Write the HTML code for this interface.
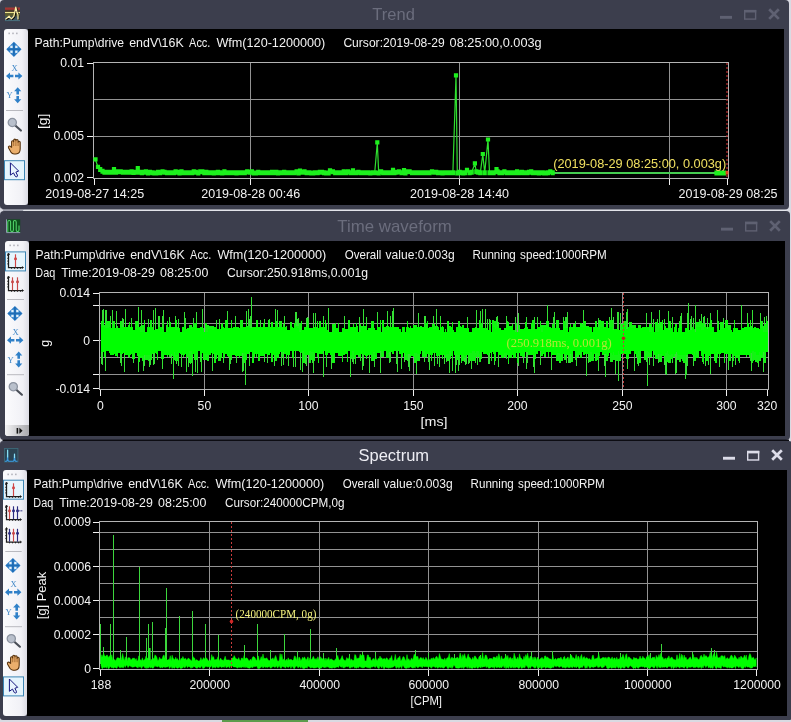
<!DOCTYPE html>
<html lang="en"><head><meta charset="utf-8"><title>Trend / Time waveform / Spectrum</title>
<style>
html,body{margin:0;padding:0;background:#3c3e4d;overflow:hidden}
body{width:791px;height:722px;position:relative}
svg text{white-space:pre}
</style></head>
<body>
<svg width="791" height="722" viewBox="0 0 791 722" style="display:block;will-change:transform" shape-rendering="auto">

<defs>
<linearGradient id="tbg" x1="0" x2="1" y1="0" y2="0">
 <stop offset="0" stop-color="#fbfbfd"/><stop offset="0.75" stop-color="#f1f1f6"/><stop offset="1" stop-color="#dcdce4"/>
</linearGradient>
<linearGradient id="ovf" x1="0" x2="1" y1="0" y2="0">
 <stop offset="0" stop-color="#f4f4f6"/><stop offset="1" stop-color="#a8a8ac"/>
</linearGradient>
<g id="i-move">
 <polygon points="0,-7.6 7.6,0 0,7.6 -7.6,0" fill="#2c7cc6"/>
 <polygon points="0,-6.2 6.2,0 0,6.2 -6.2,0" fill="#3f90d6"/>
 <rect x="-0.9" y="-6.4" width="1.8" height="12.8" fill="#1f6cb4"/>
 <rect x="-6.4" y="-0.9" width="12.8" height="1.8" fill="#1f6cb4"/>
 <rect x="-3.6" y="-3.6" width="2.3" height="2.3" fill="#e4f0fa"/>
 <rect x="1.3" y="-3.6" width="2.3" height="2.3" fill="#e4f0fa"/>
 <rect x="-3.6" y="1.3" width="2.3" height="2.3" fill="#e4f0fa"/>
 <rect x="1.3" y="1.3" width="2.3" height="2.3" fill="#e4f0fa"/>
</g>
<g id="i-harrows">
 <polygon points="-8.2,0 -4.2,-3.6 -4.2,-1.3 -0.8,-1.3 -0.8,1.3 -4.2,1.3 -4.2,3.6" fill="#2f80c8"/>
 <polygon points="8.2,0 4.2,-3.6 4.2,-1.3 0.8,-1.3 0.8,1.3 4.2,1.3 4.2,3.6" fill="#2f80c8"/>
</g>
<g id="i-varrows">
 <polygon points="0,-8 -3.6,-4 -1.3,-4 -1.3,-0.8 1.3,-0.8 1.3,-4 3.6,-4" fill="#2f80c8"/>
 <polygon points="0,8 -3.6,4 -1.3,4 -1.3,0.8 1.3,0.8 1.3,4 3.6,4" fill="#2f80c8"/>
</g>
<g id="i-zoom">
 <line x1="3" y1="3" x2="8.6" y2="8" stroke="#4a4f58" stroke-width="2.2" stroke-linecap="round"/>
 <circle cx="0" cy="0" r="4.1" fill="#b9c0cc" stroke="#8c93a0" stroke-width="1.3"/>
</g>
<g id="i-hand">
 <path d="M-2.9,0.6 V-4.9 a1.05,1.05 0 0 1 2.1,0 V-6.4 a1.1,1.1 0 0 1 2.2,0 V-6 a1.1,1.1 0 0 1 2.2,0 V-4.4 a1.05,1.05 0 0 1 2.1,0 V2.2 q0,5.2 -4.2,5.2 H-0.4 q-2,0 -3.2,-1.9 L-5.9,1.4 q-0.7,-1.3 0.4,-1.9 q1,-0.5 1.8,0.6 Z"
  fill="#eaae6c" stroke="#54300c" stroke-width="1.05" stroke-linejoin="round"/>
 <path d="M-0.8,-4.9 V-0.6 M1.4,-6 V-0.6 M3.6,-4.4 V-0.6" stroke="#8a5420" stroke-width="0.7" fill="none"/>
</g>
<g id="i-ptr">
 <path d="M0,0 V12.3 L3.1,10.1 L4.7,13.2 q0.7,1.3 1.8,0.8 q1,-0.6 0.4,-1.8 L5.5,9.3 L8.3,8.3 Z" fill="#e9f5fd" stroke="#15157e" stroke-width="1" stroke-linejoin="round"/>
</g>
<g id="i-axes">
 <path d="M0,-0.5 V13.5 H14.6" fill="none" stroke="#1c1c1c" stroke-width="1.25"/>
 <path d="M-1.4,1.5 H0 M-1.4,4.3 H0 M-1.4,7.1 H0 M-1.4,9.9 H0 M3,13.5 V14.9 M6,13.5 V14.9 M9,13.5 V14.9 M12,13.5 V14.9 M-1.2,1 L0,-1 L1.2,1 M13.4,12.4 L15,13.5 L13.4,14.6" fill="none" stroke="#1c1c1c" stroke-width="0.8"/>
</g>
</defs>

<rect x="0" y="0" width="791" height="722" fill="#d9dae2" />
<rect x="222" y="720" width="86" height="2" fill="#5c9c4c" />
<rect x="0" y="0" width="789" height="209.5" rx="4" fill="#3c3e4d"/>
<rect x="24" y="209.9" width="762" height="1.0" fill="#e4e5ec" />
<rect x="3" y="209.9" width="20" height="0.9" fill="#8c8e9c" />
<rect x="0" y="208.5" width="2.2" height="5" fill="#d9dae2" />
<rect x="0" y="211" width="790" height="229" rx="4" fill="#3c3e4d"/>
<rect x="2.5" y="439.6" width="786.5" height="1.4" fill="#0c0c12" />
<rect x="0" y="441" width="792" height="279" rx="3" fill="#3c3e4d"/>
<rect x="28" y="29" width="756" height="176" fill="#000" />
<rect x="29" y="241" width="756" height="195" fill="#000" />
<rect x="27" y="470" width="760" height="246" fill="#000" />
<g transform="translate(5,7)">
<rect x="0" y="0" width="15" height="14" fill="#3f4a48" />
<rect x="0" y="0.5" width="15" height="2.4" fill="#a43434" />
<rect x="0" y="2.9" width="15" height="2.2" fill="#4a3a2a" />
<rect x="0" y="6" width="15" height="3.5" fill="#5a5c30" />
<rect x="0" y="9.5" width="15" height="4" fill="#3e5562" />
<line x1="0" y1="5.5" x2="15" y2="5.5" stroke="#ece48c" stroke-width="1.1" />
<path d="M1.2,13.2 L4.9,10 L7.2,12.6 L9.6,10.2 L10.6,6 L11.6,1 L12.7,5.5 L13.8,8.5 L13.8,13.2" fill="none" stroke="#0c0c08" stroke-width="1.3" stroke-linejoin="round"/>
<path d="M0.4,12.4 L4.1,9.2 L6.4,11.8 L8.8,9.4 L9.8,5.2 L10.8,0.2 L11.9,4.7 L13,7.7 L13,12.6" fill="none" stroke="#fff2a8" stroke-width="1.25" stroke-linejoin="round"/>
<line x1="0" y1="13.6" x2="15" y2="13.6" stroke="#4c7484" stroke-width="0.9" />
</g>
<g transform="translate(6,219)">
<rect x="0.4" y="0.4" width="13.8" height="13.4" fill="#0c4e1a"/>
<path d="M0.5,0.3 V13.6 H14.2" fill="none" stroke="#8e9eae" stroke-width="1"/>
<path d="M1.8,13 V3 q0,-1.6 1.4,-1.6 q1.4,0 1.4,1.6 V11 q0,1.6 1.4,1.6 q1.4,0 1.4,-1.6 V3 q0,-1.6 1.4,-1.6 q1.4,0 1.4,1.6 V11 q0,1.6 1.4,1.6 q1.4,0 1.4,-1.6 V6.5" fill="none" stroke="#52d46a" stroke-width="1.05"/>
</g>
<g transform="translate(4,448)">
<rect x="0.5" y="0.5" width="13.4" height="13.4" fill="#2b4352" stroke="#3d6878" stroke-width="0.9"/>
<path d="M1,13.2 H2.4 q0.9,-0.3 1,-2 L3.6,1.8 L3.8,11.2 q0.1,1.7 1,2 H9.2 q0.9,-0.3 1,-1.8 L10.5,5.8 L10.8,11.4 q0.1,1.5 1,1.8 H13.4" fill="none" stroke="#3c9ce4" stroke-width="1.15"/>
<path d="M3.6,1.8 V9.5 M10.5,5.8 V10" fill="none" stroke="#8fe2f2" stroke-width="1.1"/>
</g>
<text x="393.6" y="19.8" font-size="16.6" fill="#6b6d7d" font-family='"Liberation Sans", sans-serif' text-anchor="middle" textLength="42.5" lengthAdjust="spacingAndGlyphs" >Trend</text>
<text x="394.6" y="231.6" font-size="16.6" fill="#6b6d7d" font-family='"Liberation Sans", sans-serif' text-anchor="middle" textLength="114.5" lengthAdjust="spacingAndGlyphs" >Time waveform</text>
<text x="393.8" y="460.8" font-size="16.6" fill="#eeeef4" font-family='"Liberation Sans", sans-serif' text-anchor="middle" textLength="70.5" lengthAdjust="spacingAndGlyphs" >Spectrum</text>
<rect x="720" y="15.9" width="12" height="2.9" fill="#5f6172" />
<rect x="744.7" y="10.7" width="10.9" height="8.4" fill="none" stroke="#5f6172" stroke-width="1.4"/>
<rect x="744" y="9.9" width="12.3" height="2.6" fill="#5f6172" />
<path d="M769.2,9.3 l9.6,9.6 M778.8,9.3 l-9.6,9.6" stroke="#5f6172" stroke-width="2.7" fill="none"/>
<rect x="721" y="227.7" width="12" height="2.9" fill="#5f6172" />
<rect x="745.7" y="222.5" width="10.9" height="8.4" fill="none" stroke="#5f6172" stroke-width="1.4"/>
<rect x="745" y="221.7" width="12.3" height="2.6" fill="#5f6172" />
<path d="M770.2,221.1 l9.6,9.6 M779.8,221.1 l-9.6,9.6" stroke="#5f6172" stroke-width="2.7" fill="none"/>
<rect x="723" y="456.8" width="12" height="2.9" fill="#dcdce8" />
<rect x="747.7" y="451.6" width="10.9" height="8.4" fill="none" stroke="#dcdce8" stroke-width="1.4"/>
<rect x="747" y="450.8" width="12.3" height="2.6" fill="#dcdce8" />
<path d="M772.2,450.2 l9.6,9.6 M781.8,450.2 l-9.6,9.6" stroke="#dcdce8" stroke-width="2.7" fill="none"/>
<rect x="4" y="29" width="24" height="176" rx="3" ry="3" fill="url(#tbg)"/>
<rect x="8.399999999999999" y="32.6" width="1.6" height="1.6" fill="#b4b4bc" />
<rect x="12.2" y="32.6" width="1.6" height="1.6" fill="#b4b4bc" />
<rect x="16.0" y="32.6" width="1.6" height="1.6" fill="#b4b4bc" />
<use href="#i-move" x="13.9" y="49.3"/>
<text x="14.5" y="70.7" font-size="8.6" fill="#3f86c6" font-family='"Liberation Serif", serif' text-anchor="middle" >X</text>
<use href="#i-harrows" x="14.200000000000001" y="76"/>
<text x="9.600000000000001" y="98.3" font-size="8.6" fill="#3f86c6" font-family='"Liberation Serif", serif' text-anchor="middle" >Y</text>
<use href="#i-varrows" x="17.7" y="95.3"/>
<line x1="6" y1="110.5" x2="23" y2="110.5" stroke="#b9b9bf" stroke-width="1" />
<use href="#i-zoom" x="12.3" y="122.5"/>
<use href="#i-hand" x="14.5" y="146.6"/>
<rect x="4.5" y="160.7" width="20" height="19" fill="#e6f5fd" stroke="#3d86b4" stroke-width="1"/>
<use href="#i-ptr" x="10.4" y="162.8"/>
<rect x="5" y="241" width="24" height="195" rx="3" ry="3" fill="url(#tbg)"/>
<rect x="9.399999999999999" y="244.6" width="1.6" height="1.6" fill="#b4b4bc" />
<rect x="13.2" y="244.6" width="1.6" height="1.6" fill="#b4b4bc" />
<rect x="17.0" y="244.6" width="1.6" height="1.6" fill="#b4b4bc" />
<rect x="5.5" y="251.9" width="20" height="19" fill="#e6f5fd" stroke="#3d86b4" stroke-width="1"/>
<use href="#i-axes" x="8.5" y="254"/>
<line x1="15.5" y1="254.3" x2="15.5" y2="267.2" stroke="#d04444" stroke-width="1.15" />
<circle cx="15.5" cy="258.8" r="1.5" fill="#d04444"/>
<use href="#i-axes" x="8.5" y="277"/>
<line x1="12.5" y1="277.3" x2="12.5" y2="290.2" stroke="#c84848" stroke-width="1.15" />
<circle cx="12.5" cy="281.8" r="1.5" fill="#c84848"/>
<line x1="17.5" y1="277.3" x2="17.5" y2="290.2" stroke="#c84848" stroke-width="1.15" />
<circle cx="17.5" cy="281.8" r="1.5" fill="#c84848"/>
<line x1="7" y1="299.5" x2="24" y2="299.5" stroke="#b9b9bf" stroke-width="1" />
<use href="#i-move" x="14.9" y="313.5"/>
<text x="15.5" y="334.9" font-size="8.6" fill="#3f86c6" font-family='"Liberation Serif", serif' text-anchor="middle" >X</text>
<use href="#i-harrows" x="15.200000000000001" y="340.2"/>
<text x="10.600000000000001" y="362.5" font-size="8.6" fill="#3f86c6" font-family='"Liberation Serif", serif' text-anchor="middle" >Y</text>
<use href="#i-varrows" x="18.7" y="359.5"/>
<line x1="7" y1="374.7" x2="24" y2="374.7" stroke="#b9b9bf" stroke-width="1" />
<use href="#i-zoom" x="13.3" y="386.7"/>
<path d="M5,425 H29 V433 q0,3 -3,3 H8 q-3,0 -3,-3 Z" fill="url(#ovf)"/>
<rect x="16.6" y="428" width="1.6" height="5.6" fill="#111" />
<polygon points="19.4,427.8 22.6,430.8 19.4,433.8" fill="#111"/>
<rect x="3" y="470" width="24" height="246" rx="3" ry="3" fill="url(#tbg)"/>
<rect x="7.3999999999999995" y="473.6" width="1.6" height="1.6" fill="#b4b4bc" />
<rect x="11.2" y="473.6" width="1.6" height="1.6" fill="#b4b4bc" />
<rect x="15.0" y="473.6" width="1.6" height="1.6" fill="#b4b4bc" />
<rect x="3.5" y="480.2" width="20" height="19" fill="#e6f5fd" stroke="#3d86b4" stroke-width="1"/>
<use href="#i-axes" x="6.5" y="483"/>
<line x1="13.5" y1="483.3" x2="13.5" y2="496.2" stroke="#d04444" stroke-width="1.15" />
<circle cx="13.5" cy="487.8" r="1.5" fill="#d04444"/>
<use href="#i-axes" x="6.5" y="506"/>
<line x1="9.5" y1="506.3" x2="9.5" y2="519.2" stroke="#c84848" stroke-width="1.15" />
<circle cx="9.5" cy="510.8" r="1.5" fill="#c84848"/>
<line x1="13.5" y1="506.3" x2="13.5" y2="519.2" stroke="#2c2c80" stroke-width="1.15" />
<circle cx="13.5" cy="510.8" r="1.5" fill="#2c2c80"/>
<line x1="17.5" y1="506.3" x2="17.5" y2="519.2" stroke="#2c2c80" stroke-width="1.15" />
<circle cx="17.5" cy="510.8" r="1.5" fill="#2c2c80"/>
<rect x="19.4" y="510.2" width="1.1" height="1.2" fill="#2c2c80" />
<rect x="21.2" y="510.2" width="1.1" height="1.2" fill="#2c2c80" />
<use href="#i-axes" x="6.5" y="528.5"/>
<line x1="9.5" y1="528.8" x2="9.5" y2="541.7" stroke="#2c2c80" stroke-width="1.15" />
<circle cx="9.5" cy="533.3" r="1.5" fill="#2c2c80"/>
<line x1="13.5" y1="528.8" x2="13.5" y2="541.7" stroke="#c84848" stroke-width="1.15" />
<circle cx="13.5" cy="533.3" r="1.5" fill="#c84848"/>
<line x1="17.5" y1="528.8" x2="17.5" y2="541.7" stroke="#2c2c80" stroke-width="1.15" />
<circle cx="17.5" cy="533.3" r="1.5" fill="#2c2c80"/>
<line x1="5.3" y1="551.5" x2="21.7" y2="551.5" stroke="#b9b9bf" stroke-width="1" />
<use href="#i-move" x="12.9" y="565.5"/>
<text x="13.5" y="586.9000000000001" font-size="8.6" fill="#3f86c6" font-family='"Liberation Serif", serif' text-anchor="middle" >X</text>
<use href="#i-harrows" x="13.200000000000001" y="592.2"/>
<text x="8.600000000000001" y="614.5" font-size="8.6" fill="#3f86c6" font-family='"Liberation Serif", serif' text-anchor="middle" >Y</text>
<use href="#i-varrows" x="16.7" y="611.5"/>
<line x1="5" y1="626.7" x2="22" y2="626.7" stroke="#b9b9bf" stroke-width="1" />
<use href="#i-zoom" x="11.3" y="638.7"/>
<use href="#i-hand" x="13.5" y="662.8000000000001"/>
<rect x="3.5" y="676.9000000000001" width="20" height="19" fill="#e6f5fd" stroke="#3d86b4" stroke-width="1"/>
<use href="#i-ptr" x="9.4" y="679.0"/>
<text y="47" font-size="12.4" fill="#f2f2f2" font-family='"Liberation Sans", sans-serif'><tspan x="34.5" textLength="89.6" lengthAdjust="spacingAndGlyphs">Path:Pump\drive</tspan> <tspan x="129.2" textLength="54.5" lengthAdjust="spacingAndGlyphs">endV\16K</tspan> <tspan x="189.1" textLength="21.3" lengthAdjust="spacingAndGlyphs">Acc.</tspan> <tspan x="216.4" textLength="108.9" lengthAdjust="spacingAndGlyphs">Wfm(120-1200000)</tspan></text>
<text y="47" font-size="12.4" fill="#f2f2f2" font-family='"Liberation Sans", sans-serif'><tspan x="343.4" textLength="101.4" lengthAdjust="spacingAndGlyphs">Cursor:2019-08-29</tspan> <tspan x="449.6" textLength="92.1" lengthAdjust="spacingAndGlyphs">08:25:00,0.003g</tspan></text>
<line x1="93" y1="99.5" x2="728" y2="99.5" stroke="#929292" stroke-width="1" />
<line x1="93" y1="136.5" x2="728" y2="136.5" stroke="#929292" stroke-width="1" />
<line x1="250.5" y1="62" x2="250.5" y2="178" stroke="#929292" stroke-width="1" />
<line x1="459.5" y1="62" x2="459.5" y2="178" stroke="#929292" stroke-width="1" />
<line x1="669.5" y1="62" x2="669.5" y2="178" stroke="#929292" stroke-width="1" />
<rect x="93.5" y="62.5" width="635" height="116" fill="none" stroke="#b4b4b4" stroke-width="1"/>
<line x1="87" y1="63.5" x2="93" y2="63.5" stroke="#f0f0f0" stroke-width="1" />
<line x1="87" y1="136.5" x2="93" y2="136.5" stroke="#f0f0f0" stroke-width="1" />
<line x1="87" y1="177.5" x2="93" y2="177.5" stroke="#f0f0f0" stroke-width="1" />
<line x1="94.5" y1="179" x2="94.5" y2="185" stroke="#f0f0f0" stroke-width="1" />
<line x1="250.5" y1="179" x2="250.5" y2="185" stroke="#f0f0f0" stroke-width="1" />
<line x1="459.5" y1="179" x2="459.5" y2="185" stroke="#f0f0f0" stroke-width="1" />
<line x1="669.5" y1="179" x2="669.5" y2="185" stroke="#f0f0f0" stroke-width="1" />
<line x1="727.5" y1="179" x2="727.5" y2="185" stroke="#f0f0f0" stroke-width="1" />
<text x="84" y="67.2" font-size="12.2" fill="#f2f2f2" font-family='"Liberation Sans", sans-serif' text-anchor="end" >0.01</text>
<text x="84" y="140.2" font-size="12.2" fill="#f2f2f2" font-family='"Liberation Sans", sans-serif' text-anchor="end" >0.005</text>
<text x="84" y="181.8" font-size="12.2" fill="#f2f2f2" font-family='"Liberation Sans", sans-serif' text-anchor="end" >0.002</text>
<text x="0" y="0" font-size="12.4" fill="#f2f2f2" font-family='"Liberation Sans", sans-serif' text-anchor="middle" textLength="15.2" lengthAdjust="spacingAndGlyphs" transform="translate(47.4,121.4) rotate(-90)">[g]</text>
<text x="45.2" y="198.2" font-size="12.4" fill="#f2f2f2" font-family='"Liberation Sans", sans-serif' textLength="99" lengthAdjust="spacingAndGlyphs" >2019-08-27 14:25</text>
<text x="250.7" y="198.2" font-size="12.4" fill="#f2f2f2" font-family='"Liberation Sans", sans-serif' text-anchor="middle" textLength="99" lengthAdjust="spacingAndGlyphs" >2019-08-28 00:46</text>
<text x="459.6" y="198.2" font-size="12.4" fill="#f2f2f2" font-family='"Liberation Sans", sans-serif' text-anchor="middle" textLength="99" lengthAdjust="spacingAndGlyphs" >2019-08-28 14:40</text>
<text x="777.6" y="198.2" font-size="12.4" fill="#f2f2f2" font-family='"Liberation Sans", sans-serif' text-anchor="end" textLength="99" lengthAdjust="spacingAndGlyphs" >2019-08-29 08:25</text>
<polyline fill="none" stroke="#44cc50" stroke-width="2" stroke-linejoin="round" points="553.5,173.0 716.5,173.0 719.0,172.9 721.5,173.1 724.0,172.9 727.0,173.0"/>
<polyline fill="none" stroke="#2fe02f" stroke-width="1.2" stroke-linejoin="round" points="95.5,159.7 98.0,167.2 100.2,169.6 102.5,171.2 104.5,172.2 107.0,172.2 108.7,172.2 110.7,172.2 112.5,172.2 114.0,169.6 116.0,172.2 118.2,171.7 120.7,171.7 122.9,172.2 125.4,172.2 127.5,172.2 129.4,172.2 131.6,171.7 133.5,172.4 135.8,172.2 137.8,168.6 139.8,172.2 141.9,172.8 144.1,172.2 145.9,171.8 148.0,172.9 150.0,172.2 152.4,172.8 154.4,172.9 156.2,172.9 158.1,172.2 160.1,172.8 162.5,171.8 164.5,172.2 167.0,172.8 169.1,172.8 171.4,172.8 173.9,172.8 175.6,171.8 177.4,172.2 179.5,172.9 181.5,171.8 183.4,172.8 185.6,172.8 187.4,172.8 189.8,172.8 192.1,172.8 193.8,171.8 195.8,172.2 198.3,172.9 200.3,171.8 202.3,171.8 204.3,172.8 206.3,172.2 208.1,172.8 210.0,172.8 211.8,172.8 213.8,172.9 215.9,172.8 217.9,172.2 219.9,172.8 222.2,172.9 224.4,171.8 226.4,172.8 228.6,172.8 231.1,172.8 232.9,172.8 234.8,172.8 236.5,172.9 238.6,172.8 240.6,172.8 242.6,172.8 244.8,172.8 247.2,171.8 249.6,172.2 251.9,171.8 253.6,172.9 255.9,172.9 258.2,172.2 260.2,172.8 262.2,172.8 264.4,172.8 266.3,172.8 268.3,172.8 270.3,172.8 272.1,172.2 273.9,172.8 276.3,172.2 278.1,172.9 279.9,172.8 281.8,172.8 284.2,172.2 286.2,172.8 288.0,172.8 290.5,172.8 292.6,172.8 294.3,172.8 296.6,171.8 298.6,172.9 300.0,170.9 302.5,172.2 304.5,171.8 306.7,172.8 309.0,172.8 311.4,172.9 313.2,172.9 315.1,172.8 317.6,172.8 319.9,172.2 322.0,172.2 324.0,172.8 326.2,172.9 328.6,172.9 330.0,170.8 332.9,171.8 335.2,172.8 337.3,172.8 339.6,172.8 341.9,172.8 343.8,171.8 346.0,172.8 348.1,171.8 350.6,172.8 353.0,170.8 354.2,172.8 356.2,172.8 358.4,172.2 360.8,172.8 363.2,172.8 365.5,172.8 367.9,172.8 370.3,172.9 372.6,172.8 374.7,172.8 377.3,142.7 378.7,172.9 381.1,171.8 383.2,172.8 385.5,172.8 387.7,172.8 390.2,172.8 393.0,170.3 394.4,172.8 396.6,172.2 399.1,171.8 401.5,172.8 404.0,170.6 405.4,172.9 407.9,171.8 409.6,171.8 412.1,172.8 414.6,172.8 416.9,172.8 418.7,172.8 420.6,172.8 422.9,172.8 424.8,172.8 427.2,172.8 429.6,172.8 432.0,171.8 434.2,172.2 436.2,172.2 438.0,172.8 440.1,172.8 442.5,172.9 444.4,172.8 446.7,172.8 448.6,172.8 450.7,172.8 452.9,172.8 456.0,75.7 457.3,172.9 459.6,172.2 461.3,172.8 463.3,172.9 465.0,172.8 467.0,170.2 469.6,172.8 471.7,172.2 474.9,163.7 476.3,171.8 478.2,172.2 480.3,172.8 482.8,154.4 484.7,172.8 488.0,139.9 489.5,172.8 491.5,172.8 493.6,172.8 496.5,169.5 497.6,171.8 499.5,172.8 501.9,172.8 504.4,171.8 506.6,172.8 508.5,172.8 511.0,172.8 513.3,172.8 515.3,172.8 517.1,171.8 519.5,172.8 521.8,172.2 523.8,172.8 525.6,172.8 527.4,172.8 529.1,172.2 531.2,171.8 532.9,172.8 535.0,172.8 537.1,172.8 538.9,172.9 540.8,172.8 542.6,172.8 544.3,172.9 546.1,172.9 547.9,172.8 550.3,171.8 552.7,172.8 553.5,173.0"/>
<path d="M93.4,157.2h4.2v4.2h-4.2zM95.9,164.7h4.2v4.2h-4.2zM98.1,167.1h4.2v5.0h-4.2zM100.4,168.7h4.2v5.0h-4.2zM102.4,169.7h4.2v5.0h-4.2zM104.9,169.7h4.2v5.0h-4.2zM106.6,169.7h4.2v5.0h-4.2zM108.6,169.7h4.2v5.0h-4.2zM110.4,169.7h4.2v5.0h-4.2zM111.9,167.1h4.2v5.0h-4.2zM113.9,169.7h4.2v5.0h-4.2zM116.1,169.2h4.2v5.0h-4.2zM118.6,169.2h4.2v5.0h-4.2zM120.8,169.7h4.2v5.0h-4.2zM123.3,169.7h4.2v5.0h-4.2zM125.4,169.7h4.2v5.0h-4.2zM127.3,169.7h4.2v5.0h-4.2zM129.5,169.2h4.2v5.0h-4.2zM131.4,169.9h4.2v5.0h-4.2zM133.7,169.7h4.2v5.0h-4.2zM135.7,166.1h4.2v5.0h-4.2zM137.7,169.7h4.2v5.0h-4.2zM139.8,170.2h4.2v5.0h-4.2zM142.0,169.8h4.2v5.0h-4.2zM143.8,169.2h4.2v5.0h-4.2zM145.9,170.4h4.2v5.0h-4.2zM147.9,169.8h4.2v5.0h-4.2zM150.3,170.2h4.2v5.0h-4.2zM152.3,170.4h4.2v5.0h-4.2zM154.1,170.4h4.2v5.0h-4.2zM156.0,169.8h4.2v5.0h-4.2zM158.0,170.2h4.2v5.0h-4.2zM160.4,169.2h4.2v5.0h-4.2zM162.4,169.8h4.2v5.0h-4.2zM164.9,170.2h4.2v5.0h-4.2zM167.0,170.2h4.2v5.0h-4.2zM169.3,170.2h4.2v5.0h-4.2zM171.8,170.2h4.2v5.0h-4.2zM173.5,169.2h4.2v5.0h-4.2zM175.3,169.8h4.2v5.0h-4.2zM177.4,170.4h4.2v5.0h-4.2zM179.4,169.2h4.2v5.0h-4.2zM181.3,170.2h4.2v5.0h-4.2zM183.5,170.2h4.2v5.0h-4.2zM185.3,170.2h4.2v5.0h-4.2zM187.7,170.2h4.2v5.0h-4.2zM190.0,170.2h4.2v5.0h-4.2zM191.7,169.2h4.2v5.0h-4.2zM193.7,169.8h4.2v5.0h-4.2zM196.2,170.4h4.2v5.0h-4.2zM198.2,169.2h4.2v5.0h-4.2zM200.2,169.2h4.2v5.0h-4.2zM202.2,170.2h4.2v5.0h-4.2zM204.2,169.8h4.2v5.0h-4.2zM206.0,170.2h4.2v5.0h-4.2zM207.9,170.2h4.2v5.0h-4.2zM209.7,170.2h4.2v5.0h-4.2zM211.7,170.4h4.2v5.0h-4.2zM213.8,170.2h4.2v5.0h-4.2zM215.8,169.8h4.2v5.0h-4.2zM217.8,170.2h4.2v5.0h-4.2zM220.1,170.4h4.2v5.0h-4.2zM222.3,169.2h4.2v5.0h-4.2zM224.3,170.2h4.2v5.0h-4.2zM226.5,170.2h4.2v5.0h-4.2zM229.0,170.2h4.2v5.0h-4.2zM230.8,170.2h4.2v5.0h-4.2zM232.7,170.2h4.2v5.0h-4.2zM234.4,170.4h4.2v5.0h-4.2zM236.5,170.2h4.2v5.0h-4.2zM238.5,170.2h4.2v5.0h-4.2zM240.5,170.2h4.2v5.0h-4.2zM242.7,170.2h4.2v5.0h-4.2zM245.1,169.2h4.2v5.0h-4.2zM247.5,169.8h4.2v5.0h-4.2zM249.8,169.2h4.2v5.0h-4.2zM251.5,170.4h4.2v5.0h-4.2zM253.8,170.4h4.2v5.0h-4.2zM256.1,169.8h4.2v5.0h-4.2zM258.1,170.2h4.2v5.0h-4.2zM260.1,170.2h4.2v5.0h-4.2zM262.3,170.2h4.2v5.0h-4.2zM264.2,170.2h4.2v5.0h-4.2zM266.2,170.2h4.2v5.0h-4.2zM268.2,170.2h4.2v5.0h-4.2zM270.0,169.8h4.2v5.0h-4.2zM271.8,170.2h4.2v5.0h-4.2zM274.2,169.8h4.2v5.0h-4.2zM276.0,170.4h4.2v5.0h-4.2zM277.8,170.2h4.2v5.0h-4.2zM279.7,170.2h4.2v5.0h-4.2zM282.1,169.8h4.2v5.0h-4.2zM284.1,170.2h4.2v5.0h-4.2zM285.9,170.2h4.2v5.0h-4.2zM288.4,170.2h4.2v5.0h-4.2zM290.5,170.2h4.2v5.0h-4.2zM292.2,170.2h4.2v5.0h-4.2zM294.5,169.2h4.2v5.0h-4.2zM296.5,170.4h4.2v5.0h-4.2zM297.9,168.4h4.2v5.0h-4.2zM300.4,169.8h4.2v5.0h-4.2zM302.4,169.2h4.2v5.0h-4.2zM304.6,170.2h4.2v5.0h-4.2zM306.9,170.2h4.2v5.0h-4.2zM309.3,170.4h4.2v5.0h-4.2zM311.1,170.4h4.2v5.0h-4.2zM313.0,170.2h4.2v5.0h-4.2zM315.5,170.2h4.2v5.0h-4.2zM317.8,169.8h4.2v5.0h-4.2zM319.9,169.8h4.2v5.0h-4.2zM321.9,170.2h4.2v5.0h-4.2zM324.1,170.4h4.2v5.0h-4.2zM326.5,170.4h4.2v5.0h-4.2zM327.9,168.3h4.2v5.0h-4.2zM330.8,169.2h4.2v5.0h-4.2zM333.1,170.2h4.2v5.0h-4.2zM335.2,170.2h4.2v5.0h-4.2zM337.5,170.2h4.2v5.0h-4.2zM339.8,170.2h4.2v5.0h-4.2zM341.7,169.2h4.2v5.0h-4.2zM343.9,170.2h4.2v5.0h-4.2zM346.0,169.2h4.2v5.0h-4.2zM348.5,170.2h4.2v5.0h-4.2zM350.9,168.3h4.2v5.0h-4.2zM352.1,170.2h4.2v5.0h-4.2zM354.1,170.2h4.2v5.0h-4.2zM356.3,169.8h4.2v5.0h-4.2zM358.7,170.2h4.2v5.0h-4.2zM361.1,170.2h4.2v5.0h-4.2zM363.4,170.2h4.2v5.0h-4.2zM365.8,170.2h4.2v5.0h-4.2zM368.2,170.4h4.2v5.0h-4.2zM370.5,170.2h4.2v5.0h-4.2zM372.6,170.2h4.2v5.0h-4.2zM375.2,140.2h4.2v4.2h-4.2zM376.6,170.4h4.2v5.0h-4.2zM379.0,169.2h4.2v5.0h-4.2zM381.1,170.2h4.2v5.0h-4.2zM383.4,170.2h4.2v5.0h-4.2zM385.6,170.2h4.2v5.0h-4.2zM388.1,170.2h4.2v5.0h-4.2zM390.9,167.8h4.2v5.0h-4.2zM392.3,170.2h4.2v5.0h-4.2zM394.5,169.8h4.2v5.0h-4.2zM397.0,169.2h4.2v5.0h-4.2zM399.4,170.2h4.2v5.0h-4.2zM401.9,168.1h4.2v5.0h-4.2zM403.3,170.4h4.2v5.0h-4.2zM405.8,169.2h4.2v5.0h-4.2zM407.5,169.2h4.2v5.0h-4.2zM410.0,170.2h4.2v5.0h-4.2zM412.5,170.2h4.2v5.0h-4.2zM414.8,170.2h4.2v5.0h-4.2zM416.6,170.2h4.2v5.0h-4.2zM418.5,170.2h4.2v5.0h-4.2zM420.8,170.2h4.2v5.0h-4.2zM422.7,170.2h4.2v5.0h-4.2zM425.1,170.2h4.2v5.0h-4.2zM427.5,170.2h4.2v5.0h-4.2zM429.9,169.2h4.2v5.0h-4.2zM432.1,169.8h4.2v5.0h-4.2zM434.1,169.8h4.2v5.0h-4.2zM435.9,170.2h4.2v5.0h-4.2zM438.0,170.2h4.2v5.0h-4.2zM440.4,170.4h4.2v5.0h-4.2zM442.3,170.2h4.2v5.0h-4.2zM444.6,170.2h4.2v5.0h-4.2zM446.5,170.2h4.2v5.0h-4.2zM448.6,170.2h4.2v5.0h-4.2zM450.8,170.2h4.2v5.0h-4.2zM453.9,73.2h4.2v4.2h-4.2zM455.2,170.4h4.2v5.0h-4.2zM457.5,169.8h4.2v5.0h-4.2zM459.2,170.2h4.2v5.0h-4.2zM461.2,170.4h4.2v5.0h-4.2zM462.9,170.2h4.2v5.0h-4.2zM464.9,167.7h4.2v5.0h-4.2zM467.5,170.2h4.2v5.0h-4.2zM469.6,169.8h4.2v5.0h-4.2zM472.8,161.2h4.2v4.2h-4.2zM474.2,169.2h4.2v5.0h-4.2zM476.1,169.8h4.2v5.0h-4.2zM478.2,170.2h4.2v5.0h-4.2zM480.7,151.9h4.2v4.2h-4.2zM482.6,170.2h4.2v5.0h-4.2zM485.9,137.4h4.2v4.2h-4.2zM487.4,170.2h4.2v5.0h-4.2zM489.4,170.2h4.2v5.0h-4.2zM491.5,170.2h4.2v5.0h-4.2zM494.4,167.0h4.2v5.0h-4.2zM495.5,169.2h4.2v5.0h-4.2zM497.4,170.2h4.2v5.0h-4.2zM499.8,170.2h4.2v5.0h-4.2zM502.3,169.2h4.2v5.0h-4.2zM504.5,170.2h4.2v5.0h-4.2zM506.4,170.2h4.2v5.0h-4.2zM508.9,170.2h4.2v5.0h-4.2zM511.2,170.2h4.2v5.0h-4.2zM513.2,170.2h4.2v5.0h-4.2zM515.0,169.2h4.2v5.0h-4.2zM517.4,170.2h4.2v5.0h-4.2zM519.7,169.8h4.2v5.0h-4.2zM521.7,170.2h4.2v5.0h-4.2zM523.5,170.2h4.2v5.0h-4.2zM525.3,170.2h4.2v5.0h-4.2zM527.0,169.8h4.2v5.0h-4.2zM529.1,169.2h4.2v5.0h-4.2zM530.8,170.2h4.2v5.0h-4.2zM532.9,170.2h4.2v5.0h-4.2zM535.0,170.2h4.2v5.0h-4.2zM536.8,170.4h4.2v5.0h-4.2zM538.7,170.2h4.2v5.0h-4.2zM540.5,170.2h4.2v5.0h-4.2zM542.2,170.4h4.2v5.0h-4.2zM544.0,170.4h4.2v5.0h-4.2zM545.8,170.2h4.2v5.0h-4.2zM548.2,169.2h4.2v5.0h-4.2zM550.6,170.2h4.2v5.0h-4.2zM714.4,170.5h4.2v5.0h-4.2zM716.9,170.4h4.2v5.0h-4.2zM719.4,170.6h4.2v5.0h-4.2zM721.9,170.4h4.2v5.0h-4.2z" fill="#1cf01c"/>
<line x1="727" y1="63" x2="727" y2="178" stroke="#c03030" stroke-width="1.2" stroke-dasharray="2 2"/>
<rect x="725.6" y="170.8" width="2.8" height="3.8" fill="#e04020" />
<text x="553.2" y="167.6" font-size="12.4" fill="#f0e060" font-family='"Liberation Sans", sans-serif' textLength="173" lengthAdjust="spacingAndGlyphs" >(2019-08-29 08:25:00, 0.003g)</text>
<text y="258.8" font-size="12.4" fill="#f2f2f2" font-family='"Liberation Sans", sans-serif'><tspan x="35.5" textLength="89.6" lengthAdjust="spacingAndGlyphs">Path:Pump\drive</tspan> <tspan x="130.2" textLength="54.5" lengthAdjust="spacingAndGlyphs">endV\16K</tspan> <tspan x="190.1" textLength="21.3" lengthAdjust="spacingAndGlyphs">Acc.</tspan> <tspan x="217.4" textLength="108.9" lengthAdjust="spacingAndGlyphs">Wfm(120-1200000)</tspan></text>
<text y="258.8" font-size="12.4" fill="#f2f2f2" font-family='"Liberation Sans", sans-serif'><tspan x="344.8" textLength="36.5" lengthAdjust="spacingAndGlyphs">Overall</tspan> <tspan x="385.6" textLength="69" lengthAdjust="spacingAndGlyphs">value:0.003g</tspan></text>
<text y="258.8" font-size="12.4" fill="#f2f2f2" font-family='"Liberation Sans", sans-serif'><tspan x="472.6" textLength="43.2" lengthAdjust="spacingAndGlyphs">Running</tspan> <tspan x="520.1" textLength="86.7" lengthAdjust="spacingAndGlyphs">speed:1000RPM</tspan></text>
<text y="276.8" font-size="12.4" fill="#f2f2f2" font-family='"Liberation Sans", sans-serif'><tspan x="35.3" textLength="19.9" lengthAdjust="spacingAndGlyphs">Daq</tspan> <tspan x="61.3" textLength="93.5" lengthAdjust="spacingAndGlyphs">Time:2019-08-29</tspan> <tspan x="160.1" textLength="48.3" lengthAdjust="spacingAndGlyphs">08:25:00</tspan></text>
<text x="227" y="276.8" font-size="12.4" fill="#f2f2f2" font-family='"Liberation Sans", sans-serif' textLength="141" lengthAdjust="spacingAndGlyphs" >Cursor:250.918ms,0.001g</text>
<line x1="99" y1="305.5" x2="768" y2="305.5" stroke="#929292" stroke-width="1" />
<line x1="99" y1="323.5" x2="768" y2="323.5" stroke="#929292" stroke-width="1" />
<line x1="99" y1="340.5" x2="768" y2="340.5" stroke="#929292" stroke-width="1" />
<line x1="99" y1="357.5" x2="768" y2="357.5" stroke="#929292" stroke-width="1" />
<line x1="99" y1="374.5" x2="768" y2="374.5" stroke="#929292" stroke-width="1" />
<line x1="204.5" y1="292" x2="204.5" y2="389" stroke="#929292" stroke-width="1" />
<line x1="308.5" y1="292" x2="308.5" y2="389" stroke="#929292" stroke-width="1" />
<line x1="413.5" y1="292" x2="413.5" y2="389" stroke="#929292" stroke-width="1" />
<line x1="517.5" y1="292" x2="517.5" y2="389" stroke="#929292" stroke-width="1" />
<line x1="622.5" y1="292" x2="622.5" y2="389" stroke="#929292" stroke-width="1" />
<line x1="726.5" y1="292" x2="726.5" y2="389" stroke="#929292" stroke-width="1" />
<rect x="99.5" y="292.5" width="669" height="97" fill="none" stroke="#b4b4b4" stroke-width="1"/>
<line x1="93" y1="293.5" x2="99" y2="293.5" stroke="#f0f0f0" stroke-width="1" />
<line x1="93" y1="305.5" x2="99" y2="305.5" stroke="#f0f0f0" stroke-width="1" />
<line x1="93" y1="340.5" x2="99" y2="340.5" stroke="#f0f0f0" stroke-width="1" />
<line x1="93" y1="374.5" x2="99" y2="374.5" stroke="#f0f0f0" stroke-width="1" />
<line x1="93" y1="388.5" x2="99" y2="388.5" stroke="#f0f0f0" stroke-width="1" />
<line x1="100.5" y1="390" x2="100.5" y2="396" stroke="#f0f0f0" stroke-width="1" />
<line x1="204.5" y1="390" x2="204.5" y2="396" stroke="#f0f0f0" stroke-width="1" />
<line x1="308.5" y1="390" x2="308.5" y2="396" stroke="#f0f0f0" stroke-width="1" />
<line x1="413.5" y1="390" x2="413.5" y2="396" stroke="#f0f0f0" stroke-width="1" />
<line x1="517.5" y1="390" x2="517.5" y2="396" stroke="#f0f0f0" stroke-width="1" />
<line x1="622.5" y1="390" x2="622.5" y2="396" stroke="#f0f0f0" stroke-width="1" />
<line x1="726.5" y1="390" x2="726.5" y2="396" stroke="#f0f0f0" stroke-width="1" />
<line x1="767.5" y1="390" x2="767.5" y2="396" stroke="#f0f0f0" stroke-width="1" />
<text x="90" y="297.4" font-size="12.2" fill="#f2f2f2" font-family='"Liberation Sans", sans-serif' text-anchor="end" >0.014</text>
<text x="90" y="345" font-size="12.2" fill="#f2f2f2" font-family='"Liberation Sans", sans-serif' text-anchor="end" >0</text>
<text x="90" y="393" font-size="12.2" fill="#f2f2f2" font-family='"Liberation Sans", sans-serif' text-anchor="end" >-0.014</text>
<text x="0" y="0" font-size="12.4" fill="#f2f2f2" font-family='"Liberation Sans", sans-serif' text-anchor="middle" transform="translate(49,343.2) rotate(-90)">g</text>
<text x="100.4" y="409.6" font-size="12.2" fill="#f2f2f2" font-family='"Liberation Sans", sans-serif' text-anchor="middle" >0</text>
<text x="204.4" y="409.6" font-size="12.2" fill="#f2f2f2" font-family='"Liberation Sans", sans-serif' text-anchor="middle" >50</text>
<text x="308.4" y="409.6" font-size="12.2" fill="#f2f2f2" font-family='"Liberation Sans", sans-serif' text-anchor="middle" >100</text>
<text x="413.4" y="409.6" font-size="12.2" fill="#f2f2f2" font-family='"Liberation Sans", sans-serif' text-anchor="middle" >150</text>
<text x="517.4" y="409.6" font-size="12.2" fill="#f2f2f2" font-family='"Liberation Sans", sans-serif' text-anchor="middle" >200</text>
<text x="622.4" y="409.6" font-size="12.2" fill="#f2f2f2" font-family='"Liberation Sans", sans-serif' text-anchor="middle" >250</text>
<text x="726.4" y="409.6" font-size="12.2" fill="#f2f2f2" font-family='"Liberation Sans", sans-serif' text-anchor="middle" >300</text>
<text x="767.2" y="409.6" font-size="12.2" fill="#f2f2f2" font-family='"Liberation Sans", sans-serif' text-anchor="middle" >320</text>
<text x="420.6" y="426.4" font-size="12.4" fill="#f2f2f2" font-family='"Liberation Sans", sans-serif' textLength="27" lengthAdjust="spacingAndGlyphs" >[ms]</text>
<path d="M101,340.5h1v23.9h-1zM102,340.5h1v24.3h-1zM103,308.5h1v32.0h-1zM106,319.4h1v21.1h-1zM110,316.4h1v24.1h-1zM116,310.7h1v29.8h-1zM120,340.5h1v22.8h-1zM121,340.5h1v25.1h-1zM122,317.7h1v22.8h-1zM123,319.3h1v21.2h-1zM125,309.3h1v31.2h-1zM131,318.3h1v22.2h-1zM133,340.5h1v22.9h-1zM138,306.9h1v33.6h-1zM143,340.5h1v30.5h-1zM144,340.5h1v25.0h-1zM148,318.8h1v21.7h-1zM149,340.5h1v26.2h-1zM150,340.5h1v24.2h-1zM153,340.5h1v24.1h-1zM154,340.5h1v23.4h-1zM155,307.9h1v32.6h-1zM158,315.5h1v25.0h-1zM159,316.2h1v24.3h-1zM162,316.4h1v24.1h-1zM162,340.5h1v28.4h-1zM163,309.7h1v30.8h-1zM169,316.5h1v24.0h-1zM171,340.5h1v23.2h-1zM173,340.5h1v29.6h-1zM175,315.8h1v24.7h-1zM176,340.5h1v23.7h-1zM178,319.4h1v21.1h-1zM178,340.5h1v25.8h-1zM181,340.5h1v26.3h-1zM184,312.4h1v28.1h-1zM185,317.5h1v23.0h-1zM186,340.5h1v31.4h-1zM188,340.5h1v26.1h-1zM190,340.5h1v23.0h-1zM192,340.5h1v35.6h-1zM193,318.1h1v22.4h-1zM195,340.5h1v31.6h-1zM196,311.8h1v28.7h-1zM197,340.5h1v32.1h-1zM202,308.8h1v31.7h-1zM212,340.5h1v30.1h-1zM216,319.5h1v21.0h-1zM219,319.2h1v21.3h-1zM223,340.5h1v22.1h-1zM227,310.5h1v30.0h-1zM229,340.5h1v29.8h-1zM230,340.5h1v23.4h-1zM235,316.3h1v24.2h-1zM236,340.5h1v22.1h-1zM242,340.5h1v31.1h-1zM243,340.5h1v30.8h-1zM246,310.9h1v29.6h-1zM248,308.7h1v31.8h-1zM249,318.9h1v21.6h-1zM249,340.5h1v25.6h-1zM250,316.2h1v24.3h-1zM260,319.5h1v21.0h-1zM264,319.4h1v21.1h-1zM264,340.5h1v21.4h-1zM267,340.5h1v22.1h-1zM269,319.4h1v21.1h-1zM274,340.5h1v25.4h-1zM275,309.3h1v31.2h-1zM277,309.7h1v30.8h-1zM281,340.5h1v25.6h-1zM283,340.5h1v24.4h-1zM284,316.0h1v24.5h-1zM288,340.5h1v25.1h-1zM293,340.5h1v26.2h-1zM295,311.9h1v28.6h-1zM295,340.5h1v26.8h-1zM296,311.6h1v28.9h-1zM297,318.8h1v21.7h-1zM298,318.1h1v22.4h-1zM300,340.5h1v29.4h-1zM302,340.5h1v31.3h-1zM303,340.5h1v21.1h-1zM305,340.5h1v23.9h-1zM306,317.8h1v22.7h-1zM306,340.5h1v25.1h-1zM307,316.5h1v24.0h-1zM308,318.1h1v22.4h-1zM312,340.5h1v22.6h-1zM313,313.4h1v27.1h-1zM313,340.5h1v32.6h-1zM315,313.3h1v27.2h-1zM323,315.5h1v25.0h-1zM323,340.5h1v36.0h-1zM326,340.5h1v26.1h-1zM328,307.8h1v32.7h-1zM331,340.5h1v28.2h-1zM344,315.8h1v24.7h-1zM350,340.5h1v36.8h-1zM352,340.5h1v21.9h-1zM353,340.5h1v23.1h-1zM355,340.5h1v23.4h-1zM359,316.8h1v23.7h-1zM362,340.5h1v29.8h-1zM363,308.5h1v32.0h-1zM363,340.5h1v25.3h-1zM366,317.0h1v23.5h-1zM369,340.5h1v32.0h-1zM374,340.5h1v26.8h-1zM377,312.1h1v28.4h-1zM380,340.5h1v32.2h-1zM387,311.0h1v29.5h-1zM389,340.5h1v22.3h-1zM390,316.2h1v24.3h-1zM390,340.5h1v21.5h-1zM392,310.9h1v29.6h-1zM393,307.8h1v32.7h-1zM396,340.5h1v23.0h-1zM397,340.5h1v31.6h-1zM401,340.5h1v28.3h-1zM404,340.5h1v21.3h-1zM408,340.5h1v26.5h-1zM409,340.5h1v30.2h-1zM416,340.5h1v33.1h-1zM418,312.5h1v28.0h-1zM424,315.8h1v24.7h-1zM424,340.5h1v21.6h-1zM425,316.4h1v24.1h-1zM428,340.5h1v21.3h-1zM429,340.5h1v29.3h-1zM433,315.9h1v24.6h-1zM434,340.5h1v25.8h-1zM436,309.3h1v31.2h-1zM437,340.5h1v23.8h-1zM439,340.5h1v26.0h-1zM440,315.8h1v24.7h-1zM444,340.5h1v23.9h-1zM446,340.5h1v21.8h-1zM449,340.5h1v32.4h-1zM452,340.5h1v30.5h-1zM455,340.5h1v32.3h-1zM456,340.5h1v24.3h-1zM458,340.5h1v30.0h-1zM459,340.5h1v24.5h-1zM461,340.5h1v22.0h-1zM464,340.5h1v21.6h-1zM465,340.5h1v24.0h-1zM466,340.5h1v23.8h-1zM467,317.4h1v23.1h-1zM468,340.5h1v23.4h-1zM469,340.5h1v22.4h-1zM471,340.5h1v28.2h-1zM475,340.5h1v22.6h-1zM476,309.7h1v30.8h-1zM477,340.5h1v24.5h-1zM480,310.5h1v30.0h-1zM482,309.0h1v31.5h-1zM485,309.3h1v31.2h-1zM487,318.5h1v22.0h-1zM488,340.5h1v23.1h-1zM489,318.7h1v21.8h-1zM489,340.5h1v23.0h-1zM494,340.5h1v24.8h-1zM496,316.6h1v23.9h-1zM497,315.6h1v24.9h-1zM498,340.5h1v26.0h-1zM506,315.6h1v24.9h-1zM508,340.5h1v23.7h-1zM515,316.9h1v23.6h-1zM518,312.8h1v27.7h-1zM518,340.5h1v25.9h-1zM523,340.5h1v22.6h-1zM526,316.8h1v23.7h-1zM526,340.5h1v28.1h-1zM527,340.5h1v22.6h-1zM533,340.5h1v26.0h-1zM534,317.4h1v23.1h-1zM534,340.5h1v32.9h-1zM537,317.3h1v23.2h-1zM540,340.5h1v24.7h-1zM547,304.9h1v35.6h-1zM551,340.5h1v29.1h-1zM553,317.1h1v23.4h-1zM554,311.6h1v28.9h-1zM563,317.2h1v23.3h-1zM565,317.4h1v23.1h-1zM566,316.5h1v24.0h-1zM566,340.5h1v22.9h-1zM567,312.3h1v28.2h-1zM568,340.5h1v22.9h-1zM569,340.5h1v22.9h-1zM570,340.5h1v22.6h-1zM576,340.5h1v25.5h-1zM583,309.7h1v30.8h-1zM586,340.5h1v35.2h-1zM588,340.5h1v22.8h-1zM598,318.1h1v22.4h-1zM598,340.5h1v30.3h-1zM604,340.5h1v25.0h-1zM609,316.7h1v23.8h-1zM611,307.6h1v32.9h-1zM613,316.8h1v23.7h-1zM615,340.5h1v33.1h-1zM617,312.0h1v28.5h-1zM618,311.9h1v28.6h-1zM620,312.6h1v27.9h-1zM626,311.8h1v28.7h-1zM627,309.3h1v31.2h-1zM627,340.5h1v28.1h-1zM634,340.5h1v30.4h-1zM637,340.5h1v23.4h-1zM638,340.5h1v25.4h-1zM646,313.2h1v27.3h-1zM646,340.5h1v21.1h-1zM649,340.5h1v24.8h-1zM651,311.8h1v28.7h-1zM653,319.1h1v21.4h-1zM653,340.5h1v25.7h-1zM657,319.1h1v21.4h-1zM658,340.5h1v22.5h-1zM659,310.2h1v30.3h-1zM664,319.4h1v21.1h-1zM664,340.5h1v24.5h-1zM665,340.5h1v31.8h-1zM666,340.5h1v34.9h-1zM668,311.0h1v29.5h-1zM672,317.1h1v23.4h-1zM672,340.5h1v22.2h-1zM675,340.5h1v33.6h-1zM676,340.5h1v32.5h-1zM680,315.9h1v24.6h-1zM681,312.8h1v27.7h-1zM685,340.5h1v38.0h-1zM686,340.5h1v34.8h-1zM687,312.9h1v27.6h-1zM687,340.5h1v25.0h-1zM690,319.4h1v21.1h-1zM691,315.6h1v24.9h-1zM693,317.5h1v23.0h-1zM693,340.5h1v25.7h-1zM695,304.5h1v36.0h-1zM699,319.3h1v21.2h-1zM701,313.5h1v27.0h-1zM703,316.9h1v23.6h-1zM703,340.5h1v23.6h-1zM704,315.6h1v24.9h-1zM705,340.5h1v25.4h-1zM707,318.0h1v22.5h-1zM708,340.5h1v24.6h-1zM710,312.6h1v27.9h-1zM710,340.5h1v33.2h-1zM717,309.5h1v31.0h-1zM719,340.5h1v26.7h-1zM723,317.7h1v22.8h-1zM728,340.5h1v29.1h-1zM732,340.5h1v26.0h-1zM735,340.5h1v24.2h-1zM739,340.5h1v22.3h-1zM741,305.2h1v35.3h-1zM747,312.5h1v28.0h-1zM751,340.5h1v30.9h-1zM752,309.7h1v30.8h-1zM752,340.5h1v21.7h-1zM755,340.5h1v21.6h-1zM758,340.5h1v26.6h-1zM760,313.2h1v27.3h-1zM763,340.5h1v31.6h-1zM764,316.9h1v23.6h-1zM765,340.5h1v21.9h-1zM766,315.6h1v24.9h-1zM251,296.5h1v44.0h-1zM688,302.5h1v38.0h-1zM647,340.5h1v45.0h-1zM245,340.5h1v44.0h-1zM173,340.5h1v38.0h-1zM618,340.5h1v40.0h-1zM112,309.5h1v31.0h-1zM102,309.5h1v31.0h-1zM103,309.5h1v31.0h-1zM105,309.5h1v31.0h-1zM106,309.5h1v31.0h-1zM105,340.5h1v30.0h-1zM141,309.5h1v31.0h-1zM153,309.5h1v31.0h-1zM201,340.5h1v31.0h-1zM138,340.5h1v31.0h-1zM124,340.5h1v31.0h-1zM665,340.5h1v33.0h-1zM605,340.5h1v36.0h-1z" fill="#34e034" shape-rendering="crispEdges"/>
<path d="M101,320.5h3v20.0h-3zM104,324.5h2v16.0h-2zM104,340.5h2v16.0h-2zM106,320.5h2v20.0h-2zM108,320.5h1v20.0h-1zM109,320.5h2v20.0h-2zM112,324.5h1v16.0h-1zM113,320.5h2v20.0h-2zM117,325.5h1v15.0h-1zM117,340.5h1v16.0h-1zM120,320.5h2v20.0h-2zM128,324.5h1v16.0h-1zM128,340.5h1v16.0h-1zM129,321.5h1v19.0h-1zM129,340.5h1v17.0h-1zM131,321.5h1v19.0h-1zM132,340.5h3v18.0h-3zM135,320.5h3v20.0h-3zM138,340.5h2v21.0h-2zM140,325.5h2v15.0h-2zM140,340.5h2v17.0h-2zM142,324.5h2v16.0h-2zM142,340.5h2v20.0h-2zM144,319.5h1v21.0h-1zM145,340.5h3v19.0h-3zM148,340.5h1v20.0h-1zM149,340.5h1v18.0h-1zM150,319.5h2v21.0h-2zM150,340.5h2v19.0h-2zM157,340.5h1v19.0h-1zM161,340.5h2v18.0h-2zM163,323.5h1v17.0h-1zM163,340.5h1v18.0h-1zM166,324.5h1v16.0h-1zM167,320.5h1v20.0h-1zM167,340.5h1v16.0h-1zM169,321.5h2v19.0h-2zM169,340.5h2v16.0h-2zM173,340.5h2v19.0h-2zM175,319.5h2v21.0h-2zM175,340.5h2v20.0h-2zM177,340.5h2v20.0h-2zM183,340.5h1v16.0h-1zM184,324.5h1v16.0h-1zM186,340.5h3v16.0h-3zM189,324.5h3v16.0h-3zM189,340.5h3v22.0h-3zM194,322.5h3v18.0h-3zM194,340.5h3v19.0h-3zM197,340.5h1v17.0h-1zM200,340.5h1v21.0h-1zM203,340.5h2v19.0h-2zM205,322.5h2v18.0h-2zM205,340.5h2v19.0h-2zM207,324.5h2v16.0h-2zM207,340.5h2v20.0h-2zM209,325.5h3v15.0h-3zM212,325.5h2v15.0h-2zM214,340.5h2v22.0h-2zM216,340.5h1v18.0h-1zM218,340.5h3v20.0h-3zM221,323.5h1v17.0h-1zM221,340.5h1v17.0h-1zM222,322.5h1v18.0h-1zM223,340.5h2v17.0h-2zM225,319.5h2v21.0h-2zM227,319.5h1v21.0h-1zM228,340.5h3v16.0h-3zM231,319.5h1v21.0h-1zM231,340.5h1v19.0h-1zM239,340.5h1v17.0h-1zM240,319.5h2v21.0h-2zM242,319.5h1v21.0h-1zM243,340.5h1v18.0h-1zM244,340.5h2v22.0h-2zM246,321.5h1v19.0h-1zM246,340.5h1v19.0h-1zM247,325.5h3v15.0h-3zM252,340.5h2v22.0h-2zM254,340.5h1v16.0h-1zM256,319.5h1v21.0h-1zM256,340.5h1v16.0h-1zM257,319.5h1v21.0h-1zM258,340.5h2v20.0h-2zM263,322.5h2v18.0h-2zM268,319.5h1v21.0h-1zM271,321.5h2v19.0h-2zM271,340.5h2v21.0h-2zM275,320.5h2v20.0h-2zM275,340.5h2v20.0h-2zM277,340.5h2v17.0h-2zM279,320.5h2v20.0h-2zM281,320.5h1v20.0h-1zM282,340.5h1v16.0h-1zM283,323.5h1v17.0h-1zM286,325.5h1v15.0h-1zM286,340.5h1v18.0h-1zM290,321.5h2v19.0h-2zM292,340.5h2v17.0h-2zM294,322.5h2v18.0h-2zM296,325.5h3v15.0h-3zM299,322.5h2v18.0h-2zM301,320.5h1v20.0h-1zM302,340.5h3v22.0h-3zM307,320.5h1v20.0h-1zM308,324.5h1v16.0h-1zM309,340.5h2v22.0h-2zM311,340.5h2v19.0h-2zM313,340.5h2v20.0h-2zM317,320.5h1v20.0h-1zM317,340.5h1v16.0h-1zM318,340.5h1v22.0h-1zM319,320.5h2v20.0h-2zM323,320.5h1v20.0h-1zM325,319.5h1v21.0h-1zM326,323.5h1v17.0h-1zM326,340.5h1v19.0h-1zM332,323.5h3v17.0h-3zM332,340.5h3v22.0h-3zM335,322.5h1v18.0h-1zM338,322.5h1v18.0h-1zM342,340.5h1v21.0h-1zM347,340.5h1v21.0h-1zM348,319.5h2v21.0h-2zM350,340.5h1v17.0h-1zM351,340.5h1v18.0h-1zM352,340.5h1v17.0h-1zM353,323.5h1v17.0h-1zM353,340.5h1v16.0h-1zM354,340.5h2v18.0h-2zM356,322.5h1v18.0h-1zM357,325.5h1v15.0h-1zM358,340.5h2v16.0h-2zM360,323.5h1v17.0h-1zM360,340.5h1v20.0h-1zM361,325.5h3v15.0h-3zM364,325.5h2v15.0h-2zM366,323.5h1v17.0h-1zM366,340.5h1v18.0h-1zM371,320.5h3v20.0h-3zM371,340.5h3v20.0h-3zM374,340.5h3v18.0h-3zM380,319.5h1v21.0h-1zM381,340.5h1v16.0h-1zM382,319.5h2v21.0h-2zM382,340.5h2v16.0h-2zM386,325.5h3v15.0h-3zM386,340.5h3v17.0h-3zM393,324.5h1v16.0h-1zM401,340.5h2v16.0h-2zM405,340.5h2v19.0h-2zM407,320.5h1v20.0h-1zM407,340.5h1v20.0h-1zM410,325.5h1v15.0h-1zM410,340.5h1v17.0h-1zM413,324.5h1v16.0h-1zM413,340.5h1v16.0h-1zM414,324.5h3v16.0h-3zM414,340.5h3v22.0h-3zM417,340.5h3v20.0h-3zM420,325.5h2v15.0h-2zM422,340.5h3v16.0h-3zM425,322.5h2v18.0h-2zM425,340.5h2v16.0h-2zM427,320.5h1v20.0h-1zM431,340.5h1v20.0h-1zM432,323.5h3v17.0h-3zM435,325.5h3v15.0h-3zM440,320.5h1v20.0h-1zM442,325.5h1v15.0h-1zM442,340.5h1v18.0h-1zM445,340.5h2v17.0h-2zM447,320.5h2v20.0h-2zM447,340.5h2v20.0h-2zM449,325.5h2v15.0h-2zM449,340.5h2v18.0h-2zM452,321.5h1v19.0h-1zM452,340.5h1v20.0h-1zM456,340.5h2v19.0h-2zM458,320.5h2v20.0h-2zM458,340.5h2v19.0h-2zM460,325.5h1v15.0h-1zM461,340.5h1v21.0h-1zM462,324.5h2v16.0h-2zM462,340.5h2v20.0h-2zM464,340.5h2v17.0h-2zM468,340.5h1v19.0h-1zM469,340.5h3v20.0h-3zM472,340.5h1v20.0h-1zM473,340.5h1v20.0h-1zM474,340.5h2v20.0h-2zM476,340.5h1v16.0h-1zM477,340.5h2v16.0h-2zM479,319.5h2v21.0h-2zM479,340.5h2v21.0h-2zM481,322.5h1v18.0h-1zM481,340.5h1v18.0h-1zM489,321.5h1v19.0h-1zM490,319.5h1v21.0h-1zM491,340.5h1v20.0h-1zM492,319.5h2v21.0h-2zM494,320.5h2v20.0h-2zM494,340.5h2v20.0h-2zM496,320.5h1v20.0h-1zM497,325.5h1v15.0h-1zM498,321.5h1v19.0h-1zM501,340.5h3v17.0h-3zM504,340.5h2v16.0h-2zM506,323.5h1v17.0h-1zM506,340.5h1v18.0h-1zM507,320.5h1v20.0h-1zM508,321.5h1v19.0h-1zM508,340.5h1v22.0h-1zM509,325.5h3v15.0h-3zM509,340.5h3v17.0h-3zM512,323.5h1v17.0h-1zM513,340.5h3v17.0h-3zM516,322.5h1v18.0h-1zM517,340.5h1v22.0h-1zM518,324.5h2v16.0h-2zM522,340.5h3v16.0h-3zM525,321.5h2v19.0h-2zM531,322.5h1v18.0h-1zM532,319.5h2v21.0h-2zM534,322.5h1v18.0h-1zM534,340.5h1v21.0h-1zM535,340.5h1v18.0h-1zM540,320.5h1v20.0h-1zM541,324.5h3v16.0h-3zM544,324.5h2v16.0h-2zM544,340.5h2v16.0h-2zM546,320.5h2v20.0h-2zM548,320.5h1v20.0h-1zM548,340.5h1v16.0h-1zM552,323.5h2v17.0h-2zM556,319.5h3v21.0h-3zM556,340.5h3v20.0h-3zM559,340.5h2v22.0h-2zM561,340.5h2v20.0h-2zM563,319.5h1v21.0h-1zM564,320.5h2v20.0h-2zM564,340.5h2v19.0h-2zM568,340.5h2v16.0h-2zM570,323.5h1v17.0h-1zM571,340.5h2v21.0h-2zM573,323.5h2v17.0h-2zM575,320.5h1v20.0h-1zM575,340.5h1v19.0h-1zM576,340.5h3v16.0h-3zM580,322.5h2v18.0h-2zM580,340.5h2v17.0h-2zM582,323.5h1v17.0h-1zM583,320.5h3v20.0h-3zM586,325.5h3v15.0h-3zM589,340.5h2v21.0h-2zM591,340.5h3v20.0h-3zM595,320.5h2v20.0h-2zM595,340.5h2v20.0h-2zM597,340.5h1v19.0h-1zM598,340.5h1v19.0h-1zM599,319.5h2v21.0h-2zM601,320.5h1v20.0h-1zM602,320.5h2v20.0h-2zM606,320.5h2v20.0h-2zM606,340.5h2v20.0h-2zM610,319.5h3v21.0h-3zM610,340.5h3v21.0h-3zM613,340.5h3v19.0h-3zM616,340.5h2v20.0h-2zM618,340.5h3v20.0h-3zM621,323.5h2v17.0h-2zM623,320.5h3v20.0h-3zM626,340.5h3v18.0h-3zM629,321.5h3v19.0h-3zM632,324.5h1v16.0h-1zM633,324.5h3v16.0h-3zM636,340.5h1v16.0h-1zM637,340.5h1v17.0h-1zM638,324.5h3v16.0h-3zM638,340.5h3v22.0h-3zM644,340.5h3v19.0h-3zM647,340.5h2v16.0h-2zM649,323.5h3v17.0h-3zM649,340.5h3v16.0h-3zM655,321.5h3v19.0h-3zM655,340.5h3v18.0h-3zM658,323.5h1v17.0h-1zM659,321.5h3v19.0h-3zM659,340.5h3v21.0h-3zM662,319.5h1v21.0h-1zM664,322.5h1v18.0h-1zM665,325.5h1v15.0h-1zM665,340.5h1v20.0h-1zM666,340.5h2v21.0h-2zM668,320.5h3v20.0h-3zM668,340.5h3v22.0h-3zM671,340.5h1v18.0h-1zM672,322.5h1v18.0h-1zM672,340.5h1v20.0h-1zM673,340.5h2v16.0h-2zM675,323.5h2v17.0h-2zM677,340.5h2v19.0h-2zM679,320.5h2v20.0h-2zM679,340.5h2v21.0h-2zM681,324.5h1v16.0h-1zM681,340.5h1v18.0h-1zM682,340.5h1v20.0h-1zM683,340.5h3v22.0h-3zM688,321.5h1v19.0h-1zM694,340.5h2v20.0h-2zM696,321.5h3v19.0h-3zM696,340.5h3v17.0h-3zM699,320.5h3v20.0h-3zM702,322.5h2v18.0h-2zM702,340.5h2v21.0h-2zM705,323.5h1v17.0h-1zM705,340.5h1v20.0h-1zM706,340.5h3v20.0h-3zM709,322.5h1v18.0h-1zM710,319.5h2v21.0h-2zM714,340.5h1v20.0h-1zM715,340.5h2v22.0h-2zM717,340.5h1v17.0h-1zM718,320.5h1v20.0h-1zM719,340.5h1v16.0h-1zM720,321.5h3v19.0h-3zM723,324.5h1v16.0h-1zM724,340.5h1v22.0h-1zM725,319.5h3v21.0h-3zM728,324.5h3v16.0h-3zM728,340.5h3v20.0h-3zM733,340.5h1v20.0h-1zM734,319.5h1v21.0h-1zM735,340.5h3v17.0h-3zM738,340.5h2v20.0h-2zM746,340.5h1v16.0h-1zM747,322.5h2v18.0h-2zM749,340.5h1v16.0h-1zM750,319.5h1v21.0h-1zM750,340.5h1v20.0h-1zM751,325.5h1v15.0h-1zM752,340.5h1v22.0h-1zM753,340.5h1v20.0h-1zM754,340.5h1v19.0h-1zM755,340.5h2v21.0h-2zM757,340.5h1v22.0h-1zM758,340.5h2v20.0h-2zM760,321.5h1v19.0h-1zM760,340.5h1v20.0h-1zM761,320.5h2v20.0h-2zM761,340.5h2v17.0h-2zM763,325.5h1v15.0h-1zM764,323.5h2v17.0h-2zM764,340.5h2v22.0h-2zM766,320.5h2v20.0h-2z" fill="#12f412" shape-rendering="crispEdges"/>
<path d="M101,326.5h3v25.0h-3zM104,326.5h1v26.0h-1zM105,327.5h4v23.0h-4zM109,326.5h1v26.0h-1zM110,327.5h4v27.0h-4zM114,326.5h1v27.0h-1zM115,327.5h2v28.0h-2zM117,329.5h1v21.0h-1zM118,327.5h2v25.0h-2zM120,326.5h3v27.0h-3zM123,326.5h2v26.0h-2zM125,326.5h2v28.0h-2zM127,326.5h4v28.0h-4zM131,326.5h2v27.0h-2zM133,329.5h2v23.0h-2zM135,328.5h2v24.0h-2zM137,326.5h1v29.0h-1zM138,326.5h2v27.0h-2zM140,331.5h4v24.0h-4zM144,331.5h3v23.0h-3zM147,326.5h4v28.0h-4zM151,326.5h2v27.0h-2zM153,329.5h3v23.0h-3zM156,328.5h2v25.0h-2zM158,326.5h4v24.0h-4zM162,328.5h2v25.0h-2zM164,331.5h4v23.0h-4zM168,326.5h3v28.0h-3zM171,326.5h1v27.0h-1zM172,326.5h2v29.0h-2zM174,326.5h1v25.0h-1zM175,329.5h2v25.0h-2zM177,326.5h1v28.0h-1zM178,327.5h2v25.0h-2zM180,331.5h2v22.0h-2zM182,326.5h3v28.0h-3zM185,328.5h2v25.0h-2zM187,327.5h2v26.0h-2zM189,328.5h3v22.0h-3zM192,326.5h1v28.0h-1zM193,326.5h4v27.0h-4zM197,327.5h3v23.0h-3zM200,326.5h2v27.0h-2zM202,327.5h2v25.0h-2zM204,331.5h4v22.0h-4zM208,328.5h3v26.0h-3zM211,328.5h1v24.0h-1zM212,329.5h2v24.0h-2zM214,326.5h3v26.0h-3zM217,328.5h4v26.0h-4zM221,326.5h3v26.0h-3zM224,327.5h3v26.0h-3zM227,327.5h4v28.0h-4zM231,327.5h2v27.0h-2zM233,326.5h2v28.0h-2zM235,326.5h4v29.0h-4zM239,327.5h3v28.0h-3zM242,326.5h4v26.0h-4zM246,326.5h3v27.0h-3zM249,327.5h3v24.0h-3zM252,326.5h2v27.0h-2zM254,326.5h1v26.0h-1zM255,326.5h3v27.0h-3zM258,326.5h4v29.0h-4zM262,326.5h2v29.0h-2zM264,326.5h3v27.0h-3zM267,326.5h3v28.0h-3zM270,326.5h1v26.0h-1zM271,326.5h2v27.0h-2zM273,326.5h3v28.0h-3zM276,326.5h3v28.0h-3zM279,327.5h1v26.0h-1zM280,326.5h4v25.0h-4zM284,326.5h2v27.0h-2zM286,329.5h4v25.0h-4zM290,326.5h3v24.0h-3zM293,327.5h1v25.0h-1zM294,326.5h3v24.0h-3zM297,327.5h2v23.0h-2zM299,331.5h2v20.0h-2zM301,329.5h1v23.0h-1zM302,329.5h2v21.0h-2zM304,326.5h1v26.0h-1zM305,326.5h4v28.0h-4zM309,327.5h2v23.0h-2zM311,327.5h3v24.0h-3zM314,326.5h3v26.0h-3zM317,327.5h2v25.0h-2zM319,326.5h4v27.0h-4zM323,326.5h2v24.0h-2zM325,329.5h3v25.0h-3zM328,331.5h2v21.0h-2zM330,331.5h4v23.0h-4zM334,327.5h4v25.0h-4zM338,331.5h4v24.0h-4zM342,327.5h3v27.0h-3zM345,328.5h3v25.0h-3zM348,326.5h2v24.0h-2zM350,326.5h2v28.0h-2zM352,326.5h2v24.0h-2zM354,326.5h4v28.0h-4zM358,331.5h3v22.0h-3zM361,327.5h2v26.0h-2zM363,326.5h2v28.0h-2zM365,329.5h3v26.0h-3zM368,327.5h3v27.0h-3zM371,327.5h2v26.0h-2zM373,327.5h2v24.0h-2zM375,329.5h2v25.0h-2zM377,326.5h3v26.0h-3zM380,331.5h4v19.0h-4zM384,326.5h3v24.0h-3zM387,329.5h2v23.0h-2zM389,326.5h3v25.0h-3zM392,326.5h2v27.0h-2zM394,326.5h2v24.0h-2zM396,326.5h3v24.0h-3zM399,328.5h2v25.0h-2zM401,331.5h1v24.0h-1zM402,326.5h3v26.0h-3zM405,331.5h1v24.0h-1zM406,326.5h3v27.0h-3zM409,327.5h2v26.0h-2zM411,327.5h3v28.0h-3zM414,328.5h1v24.0h-1zM415,326.5h2v26.0h-2zM417,326.5h4v27.0h-4zM421,326.5h4v24.0h-4zM425,327.5h4v26.0h-4zM429,326.5h1v28.0h-1zM430,326.5h3v28.0h-3zM433,328.5h3v24.0h-3zM436,326.5h3v29.0h-3zM439,329.5h2v25.0h-2zM441,326.5h3v28.0h-3zM444,331.5h1v23.0h-1zM445,328.5h1v26.0h-1zM446,331.5h3v22.0h-3zM449,326.5h2v24.0h-2zM451,326.5h2v29.0h-2zM453,329.5h1v21.0h-1zM454,331.5h2v23.0h-2zM456,326.5h1v27.0h-1zM457,326.5h2v28.0h-2zM459,326.5h2v28.0h-2zM461,326.5h3v28.0h-3zM464,327.5h2v28.0h-2zM466,327.5h3v27.0h-3zM469,331.5h3v21.0h-3zM472,327.5h3v23.0h-3zM475,326.5h1v26.0h-1zM476,327.5h3v23.0h-3zM479,328.5h1v25.0h-1zM480,326.5h3v25.0h-3zM483,327.5h4v26.0h-4zM487,329.5h2v25.0h-2zM489,326.5h2v26.0h-2zM491,331.5h2v20.0h-2zM493,326.5h2v27.0h-2zM495,328.5h1v25.0h-1zM496,327.5h2v24.0h-2zM498,327.5h3v27.0h-3zM501,329.5h3v25.0h-3zM504,327.5h3v25.0h-3zM507,326.5h4v28.0h-4zM511,326.5h2v28.0h-2zM513,329.5h2v26.0h-2zM515,331.5h1v23.0h-1zM516,331.5h4v21.0h-4zM520,328.5h3v27.0h-3zM523,328.5h1v26.0h-1zM524,327.5h2v24.0h-2zM526,326.5h2v25.0h-2zM528,328.5h3v26.0h-3zM531,329.5h4v25.0h-4zM535,328.5h2v25.0h-2zM537,326.5h1v27.0h-1zM538,326.5h3v24.0h-3zM541,331.5h2v24.0h-2zM543,326.5h2v27.0h-2zM545,326.5h1v27.0h-1zM546,326.5h3v25.0h-3zM549,326.5h2v25.0h-2zM551,327.5h3v27.0h-3zM554,327.5h3v27.0h-3zM557,327.5h3v25.0h-3zM560,329.5h3v24.0h-3zM563,327.5h3v26.0h-3zM566,327.5h2v27.0h-2zM568,331.5h1v24.0h-1zM569,326.5h4v27.0h-4zM573,327.5h2v23.0h-2zM575,326.5h3v27.0h-3zM578,326.5h2v28.0h-2zM580,326.5h3v25.0h-3zM583,326.5h2v28.0h-2zM585,326.5h3v27.0h-3zM588,326.5h2v27.0h-2zM590,326.5h2v25.0h-2zM592,331.5h1v23.0h-1zM593,326.5h2v27.0h-2zM595,326.5h4v26.0h-4zM599,328.5h1v27.0h-1zM600,326.5h2v25.0h-2zM602,326.5h1v28.0h-1zM603,328.5h1v26.0h-1zM604,326.5h3v27.0h-3zM607,327.5h2v28.0h-2zM609,326.5h3v26.0h-3zM612,329.5h1v25.0h-1zM613,329.5h1v22.0h-1zM614,328.5h2v26.0h-2zM616,328.5h2v26.0h-2zM618,329.5h1v21.0h-1zM619,329.5h4v24.0h-4zM623,326.5h3v27.0h-3zM626,328.5h2v27.0h-2zM628,326.5h3v27.0h-3zM631,327.5h3v23.0h-3zM634,327.5h4v26.0h-4zM638,327.5h4v23.0h-4zM642,326.5h4v24.0h-4zM646,326.5h2v24.0h-2zM648,326.5h1v25.0h-1zM649,331.5h3v21.0h-3zM652,326.5h2v24.0h-2zM654,331.5h4v23.0h-4zM658,331.5h1v22.0h-1zM659,327.5h3v26.0h-3zM662,329.5h3v26.0h-3zM665,327.5h2v25.0h-2zM667,327.5h1v23.0h-1zM668,329.5h1v24.0h-1zM669,329.5h2v25.0h-2zM671,327.5h2v26.0h-2zM673,331.5h1v24.0h-1zM674,326.5h2v27.0h-2zM676,326.5h1v25.0h-1zM677,331.5h1v22.0h-1zM678,327.5h4v27.0h-4zM682,331.5h3v23.0h-3zM685,327.5h3v27.0h-3zM688,331.5h1v22.0h-1zM689,329.5h3v24.0h-3zM692,326.5h2v28.0h-2zM694,328.5h1v23.0h-1zM695,331.5h1v24.0h-1zM696,326.5h3v24.0h-3zM699,326.5h2v24.0h-2zM701,329.5h3v26.0h-3zM704,326.5h3v27.0h-3zM707,328.5h1v27.0h-1zM708,326.5h3v29.0h-3zM711,326.5h3v27.0h-3zM714,331.5h3v22.0h-3zM717,327.5h1v24.0h-1zM718,329.5h3v24.0h-3zM721,328.5h3v24.0h-3zM724,327.5h4v26.0h-4zM728,329.5h4v24.0h-4zM732,331.5h1v22.0h-1zM733,327.5h1v26.0h-1zM734,327.5h2v28.0h-2zM736,327.5h2v27.0h-2zM738,329.5h1v25.0h-1zM739,329.5h2v25.0h-2zM741,327.5h3v27.0h-3zM744,326.5h3v28.0h-3zM747,326.5h3v28.0h-3zM750,329.5h2v23.0h-2zM752,327.5h2v23.0h-2zM754,326.5h2v25.0h-2zM756,327.5h3v27.0h-3zM759,328.5h1v23.0h-1zM760,327.5h3v27.0h-3zM763,331.5h3v20.0h-3zM766,331.5h2v20.0h-2z" fill="#00ff00" shape-rendering="crispEdges"/>
<rect x="101" y="332.5" width="667" height="17" fill="#00ff00" />
<line x1="623.5" y1="293" x2="623.5" y2="389" stroke="#c83c3c" stroke-width="1" stroke-dasharray="2 2"/>
<circle cx="623.5" cy="338.2" r="1.8" fill="#c02020"/>
<text x="506.5" y="347.2" font-size="12.5" fill="#b6e636" font-family='"Liberation Serif", serif' textLength="105.3" lengthAdjust="spacingAndGlyphs" >(250.918ms, 0.001g)</text>
<text y="488" font-size="12.4" fill="#f2f2f2" font-family='"Liberation Sans", sans-serif'><tspan x="33.5" textLength="89.6" lengthAdjust="spacingAndGlyphs">Path:Pump\drive</tspan> <tspan x="128.2" textLength="54.5" lengthAdjust="spacingAndGlyphs">endV\16K</tspan> <tspan x="188.1" textLength="21.3" lengthAdjust="spacingAndGlyphs">Acc.</tspan> <tspan x="215.4" textLength="108.9" lengthAdjust="spacingAndGlyphs">Wfm(120-1200000)</tspan></text>
<text y="488" font-size="12.4" fill="#f2f2f2" font-family='"Liberation Sans", sans-serif'><tspan x="342.8" textLength="36.5" lengthAdjust="spacingAndGlyphs">Overall</tspan> <tspan x="383.6" textLength="69" lengthAdjust="spacingAndGlyphs">value:0.003g</tspan></text>
<text y="488" font-size="12.4" fill="#f2f2f2" font-family='"Liberation Sans", sans-serif'><tspan x="470.6" textLength="43.2" lengthAdjust="spacingAndGlyphs">Running</tspan> <tspan x="518.1" textLength="86.7" lengthAdjust="spacingAndGlyphs">speed:1000RPM</tspan></text>
<text y="506.6" font-size="12.4" fill="#f2f2f2" font-family='"Liberation Sans", sans-serif'><tspan x="33.3" textLength="19.9" lengthAdjust="spacingAndGlyphs">Daq</tspan> <tspan x="59.3" textLength="93.5" lengthAdjust="spacingAndGlyphs">Time:2019-08-29</tspan> <tspan x="158.1" textLength="48.3" lengthAdjust="spacingAndGlyphs">08:25:00</tspan></text>
<text x="225" y="506.6" font-size="12.4" fill="#f2f2f2" font-family='"Liberation Sans", sans-serif' textLength="119.6" lengthAdjust="spacingAndGlyphs" >Cursor:240000CPM,0g</text>
<line x1="99" y1="532.5" x2="757" y2="532.5" stroke="#929292" stroke-width="1" />
<line x1="99" y1="549.5" x2="757" y2="549.5" stroke="#929292" stroke-width="1" />
<line x1="99" y1="566.5" x2="757" y2="566.5" stroke="#929292" stroke-width="1" />
<line x1="99" y1="583.5" x2="757" y2="583.5" stroke="#929292" stroke-width="1" />
<line x1="99" y1="600.5" x2="757" y2="600.5" stroke="#929292" stroke-width="1" />
<line x1="99" y1="617.5" x2="757" y2="617.5" stroke="#929292" stroke-width="1" />
<line x1="99" y1="634.5" x2="757" y2="634.5" stroke="#929292" stroke-width="1" />
<line x1="99" y1="651.5" x2="757" y2="651.5" stroke="#929292" stroke-width="1" />
<line x1="209.5" y1="521" x2="209.5" y2="669" stroke="#929292" stroke-width="1" />
<line x1="319.5" y1="521" x2="319.5" y2="669" stroke="#929292" stroke-width="1" />
<line x1="428.5" y1="521" x2="428.5" y2="669" stroke="#929292" stroke-width="1" />
<line x1="538.5" y1="521" x2="538.5" y2="669" stroke="#929292" stroke-width="1" />
<line x1="647.5" y1="521" x2="647.5" y2="669" stroke="#929292" stroke-width="1" />
<rect x="99.5" y="521.5" width="658" height="148" fill="none" stroke="#b4b4b4" stroke-width="1"/>
<line x1="93" y1="522.5" x2="99" y2="522.5" stroke="#f0f0f0" stroke-width="1" />
<line x1="93" y1="532.5" x2="99" y2="532.5" stroke="#f0f0f0" stroke-width="1" />
<line x1="93" y1="566.5" x2="99" y2="566.5" stroke="#f0f0f0" stroke-width="1" />
<line x1="93" y1="600.5" x2="99" y2="600.5" stroke="#f0f0f0" stroke-width="1" />
<line x1="93" y1="634.5" x2="99" y2="634.5" stroke="#f0f0f0" stroke-width="1" />
<line x1="93" y1="668.5" x2="99" y2="668.5" stroke="#f0f0f0" stroke-width="1" />
<line x1="100.5" y1="670" x2="100.5" y2="676" stroke="#f0f0f0" stroke-width="1" />
<line x1="209.5" y1="670" x2="209.5" y2="676" stroke="#f0f0f0" stroke-width="1" />
<line x1="319.5" y1="670" x2="319.5" y2="676" stroke="#f0f0f0" stroke-width="1" />
<line x1="428.5" y1="670" x2="428.5" y2="676" stroke="#f0f0f0" stroke-width="1" />
<line x1="538.5" y1="670" x2="538.5" y2="676" stroke="#f0f0f0" stroke-width="1" />
<line x1="647.5" y1="670" x2="647.5" y2="676" stroke="#f0f0f0" stroke-width="1" />
<line x1="756.5" y1="670" x2="756.5" y2="676" stroke="#f0f0f0" stroke-width="1" />
<text x="91" y="526.4" font-size="12.2" fill="#f2f2f2" font-family='"Liberation Sans", sans-serif' text-anchor="end" >0.0009</text>
<text x="91" y="570.8" font-size="12.2" fill="#f2f2f2" font-family='"Liberation Sans", sans-serif' text-anchor="end" >0.0006</text>
<text x="91" y="604.8" font-size="12.2" fill="#f2f2f2" font-family='"Liberation Sans", sans-serif' text-anchor="end" >0.0004</text>
<text x="91" y="638.8" font-size="12.2" fill="#f2f2f2" font-family='"Liberation Sans", sans-serif' text-anchor="end" >0.0002</text>
<text x="91" y="673" font-size="12.2" fill="#f2f2f2" font-family='"Liberation Sans", sans-serif' text-anchor="end" >0</text>
<text x="0" y="0" font-size="12.4" fill="#f2f2f2" font-family='"Liberation Sans", sans-serif' text-anchor="middle" textLength="47.3" lengthAdjust="spacingAndGlyphs" transform="translate(46.4,595.5) rotate(-90)">[g] Peak</text>
<text x="101" y="689" font-size="12.2" fill="#f2f2f2" font-family='"Liberation Sans", sans-serif' text-anchor="middle" >188</text>
<text x="209.8" y="689" font-size="12.2" fill="#f2f2f2" font-family='"Liberation Sans", sans-serif' text-anchor="middle" >200000</text>
<text x="319.8" y="689" font-size="12.2" fill="#f2f2f2" font-family='"Liberation Sans", sans-serif' text-anchor="middle" >400000</text>
<text x="428.8" y="689" font-size="12.2" fill="#f2f2f2" font-family='"Liberation Sans", sans-serif' text-anchor="middle" >600000</text>
<text x="538.8" y="689" font-size="12.2" fill="#f2f2f2" font-family='"Liberation Sans", sans-serif' text-anchor="middle" >800000</text>
<text x="647.8" y="689" font-size="12.2" fill="#f2f2f2" font-family='"Liberation Sans", sans-serif' text-anchor="middle" >1000000</text>
<text x="780.8" y="689" font-size="12.2" fill="#f2f2f2" font-family='"Liberation Sans", sans-serif' text-anchor="end" >1200000</text>
<text x="410.6" y="705" font-size="12.4" fill="#f2f2f2" font-family='"Liberation Sans", sans-serif' textLength="31.4" lengthAdjust="spacingAndGlyphs" >[CPM]</text>
<path d="M113,535.0h1V664h-1zM139,567.0h1V664h-1zM166,587.7h1V664h-1zM179,616.0h1V664h-1zM192,611.0h1V664h-1zM205,624.0h1V664h-1zM218,635.0h1V664h-1zM244,645.0h1V664h-1zM257,624.0h1V664h-1zM284,633.5h1V664h-1zM310,629.2h1V664h-1zM336,648.0h1V664h-1zM362,652.0h1V664h-1zM375,652.0h1V664h-1zM415,650.0h1V664h-1zM100,624.0h1V664h-1zM110,624.0h1V664h-1zM126,636.6h1V664h-1zM148,624.0h1V664h-1zM152,621.8h1V664h-1zM165,628.0h1V664h-1zM146,637.8h1V664h-1zM103,647.0h1V664h-1zM270,650.0h1V664h-1zM297,651.0h1V664h-1zM323,653.0h1V664h-1zM349,654.0h1V664h-1zM428,653.0h1V664h-1zM454,654.0h1V664h-1zM480,654.5h1V664h-1zM531,651.5h1V664h-1zM711,648.0h1V664h-1zM714,649.5h1V664h-1zM620,652.5h1V664h-1zM650,653.0h1V664h-1zM505,653.5h1V664h-1zM570,654.0h1V664h-1zM120,650.0h1V664h-1zM661,643.5h1V664h-1zM552,650.5h1V664h-1zM598,652.0h1V664h-1zM692,652.0h1V664h-1z" fill="#3cd63c" shape-rendering="crispEdges"/>
<path d="M101.0,657.3 L101.9,654.7 L102.8,657.3 L103.7,653.5 L104.6,655.7 L105.5,656.5 L106.4,655.3 L107.3,655.1 L108.2,657.4 L109.1,656.5 L110.0,655.5 L110.9,657.8 L111.8,654.7 L112.7,659.5 L113.6,660.5 L114.5,659.4 L115.4,661.1 L116.3,659.4 L117.2,657.8 L118.1,657.7 L119.0,658.3 L119.9,658.5 L120.8,661.2 L121.7,657.8 L122.6,653.4 L123.5,657.7 L124.4,661.1 L125.3,656.8 L126.2,660.1 L127.1,660.7 L128.0,657.5 L128.9,658.0 L129.8,657.8 L130.7,659.7 L131.6,659.7 L132.5,658.2 L133.4,658.3 L134.3,658.0 L135.2,660.3 L136.1,658.5 L137.0,661.2 L137.9,660.6 L138.8,655.8 L139.7,660.4 L140.6,659.7 L141.5,660.7 L142.4,657.8 L143.3,660.6 L144.2,659.9 L145.1,658.9 L146.0,656.2 L146.9,658.0 L147.8,658.3 L148.7,657.6 L149.6,657.1 L150.5,660.7 L151.4,659.2 L152.3,660.9 L153.2,658.6 L154.1,658.4 L155.0,654.8 L155.9,655.7 L156.8,657.2 L157.7,660.5 L158.6,660.3 L159.5,657.2 L160.4,659.0 L161.3,659.2 L162.2,658.6 L163.1,655.7 L164.0,654.9 L164.9,658.1 L165.8,658.6 L166.7,659.8 L167.6,660.1 L168.5,659.6 L169.4,659.6 L170.3,655.7 L171.2,661.0 L172.1,655.2 L173.0,657.9 L173.9,659.3 L174.8,659.7 L175.7,657.2 L176.6,659.5 L177.5,658.6 L178.4,660.8 L179.3,659.5 L180.2,660.6 L181.1,658.2 L182.0,659.0 L182.9,656.5 L183.8,658.7 L184.7,658.9 L185.6,658.3 L186.5,660.3 L187.4,659.3 L188.3,658.1 L189.2,658.8 L190.1,659.6 L191.0,660.4 L191.9,661.1 L192.8,656.3 L193.7,657.8 L194.6,658.0 L195.5,660.8 L196.4,659.7 L197.3,659.9 L198.2,661.1 L199.1,660.9 L200.0,660.4 L200.9,657.6 L201.8,660.5 L202.7,659.2 L203.6,657.6 L204.5,659.2 L205.4,658.0 L206.3,657.8 L207.2,658.9 L208.1,660.2 L209.0,661.2 L209.9,660.3 L210.8,660.5 L211.7,654.6 L212.6,657.8 L213.5,656.6 L214.4,660.0 L215.3,659.7 L216.2,659.4 L217.1,659.5 L218.0,656.7 L218.9,660.9 L219.8,659.7 L220.7,658.1 L221.6,659.9 L222.5,660.1 L223.4,660.7 L224.3,658.8 L225.2,656.2 L226.1,660.0 L227.0,659.9 L227.9,660.0 L228.8,659.9 L229.7,660.2 L230.6,660.8 L231.5,659.1 L232.4,657.9 L233.3,657.9 L234.2,655.6 L235.1,657.4 L236.0,658.7 L236.9,659.0 L237.8,659.6 L238.7,657.6 L239.6,659.9 L240.5,661.1 L241.4,658.0 L242.3,658.1 L243.2,659.8 L244.1,655.5 L245.0,659.1 L245.9,657.9 L246.8,657.9 L247.7,658.7 L248.6,660.6 L249.5,660.9 L250.4,659.1 L251.3,660.9 L252.2,658.1 L253.1,656.5 L254.0,657.1 L254.9,657.6 L255.8,659.6 L256.7,660.8 L257.6,657.6 L258.5,655.9 L259.4,660.9 L260.3,659.5 L261.2,656.6 L262.1,659.4 L263.0,654.0 L263.9,659.0 L264.8,658.1 L265.7,658.7 L266.6,657.7 L267.5,659.1 L268.4,660.2 L269.3,660.6 L270.2,660.7 L271.1,659.1 L272.0,658.9 L272.9,657.8 L273.8,659.9 L274.7,657.7 L275.6,655.4 L276.5,657.9 L277.4,661.0 L278.3,661.2 L279.2,660.3 L280.1,653.6 L281.0,657.7 L281.9,654.1 L282.8,659.9 L283.7,659.0 L284.6,659.9 L285.5,660.7 L286.4,659.1 L287.3,661.0 L288.2,657.8 L289.1,660.0 L290.0,659.6 L290.9,659.4 L291.8,659.7 L292.7,660.6 L293.6,659.4 L294.5,655.9 L295.4,656.4 L296.3,660.6 L297.2,656.9 L298.1,660.9 L299.0,656.9 L299.9,658.0 L300.8,660.8 L301.7,659.4 L302.6,657.2 L303.5,658.7 L304.4,656.8 L305.3,658.6 L306.2,660.2 L307.1,658.6 L308.0,656.8 L308.9,661.0 L309.8,657.9 L310.7,658.9 L311.6,659.5 L312.5,658.0 L313.4,656.3 L314.3,658.7 L315.2,659.4 L316.1,658.3 L317.0,659.9 L317.9,656.7 L318.8,658.9 L319.7,661.1 L320.6,656.7 L321.5,658.5 L322.4,658.6 L323.3,659.7 L324.2,660.2 L325.1,658.0 L326.0,660.8 L326.9,658.4 L327.8,659.9 L328.7,657.3 L329.6,660.5 L330.5,659.1 L331.4,659.0 L332.3,659.7 L333.2,660.3 L334.1,661.1 L335.0,659.5 L335.9,659.0 L336.8,657.1 L337.7,655.4 L338.6,659.1 L339.5,660.2 L340.4,659.4 L341.3,658.0 L342.2,655.6 L343.1,658.8 L344.0,660.0 L344.9,660.6 L345.8,660.4 L346.7,657.5 L347.6,658.8 L348.5,658.9 L349.4,656.5 L350.3,660.7 L351.2,658.8 L352.1,660.4 L353.0,659.9 L353.9,660.8 L354.8,654.5 L355.7,655.1 L356.6,658.7 L357.5,658.4 L358.4,658.2 L359.3,657.9 L360.2,653.9 L361.1,655.9 L362.0,654.7 L362.9,655.0 L363.8,654.9 L364.7,660.4 L365.6,661.1 L366.5,660.4 L367.4,654.9 L368.3,654.9 L369.2,657.8 L370.1,657.0 L371.0,660.3 L371.9,660.7 L372.8,658.8 L373.7,658.5 L374.6,660.4 L375.5,656.8 L376.4,659.4 L377.3,661.1 L378.2,658.4 L379.1,658.9 L380.0,656.1 L380.9,658.2 L381.8,657.9 L382.7,659.5 L383.6,658.8 L384.5,658.4 L385.4,659.7 L386.3,657.8 L387.2,658.2 L388.1,659.7 L389.0,660.3 L389.9,658.0 L390.8,658.2 L391.7,655.5 L392.6,661.1 L393.5,660.7 L394.4,659.2 L395.3,654.4 L396.2,659.8 L397.1,660.1 L398.0,657.7 L398.9,658.0 L399.8,655.9 L400.7,660.7 L401.6,660.3 L402.5,657.9 L403.4,656.4 L404.3,657.6 L405.2,660.0 L406.1,660.7 L407.0,654.6 L407.9,659.7 L408.8,658.7 L409.7,660.5 L410.6,660.2 L411.5,657.9 L412.4,659.9 L413.3,658.0 L414.2,654.2 L415.1,655.0 L416.0,656.8 L416.9,656.5 L417.8,656.4 L418.7,659.9 L419.6,659.1 L420.5,657.6 L421.4,657.7 L422.3,659.4 L423.2,657.5 L424.1,659.8 L425.0,659.8 L425.9,657.3 L426.8,658.8 L427.7,660.4 L428.6,660.0 L429.5,659.4 L430.4,660.0 L431.3,657.9 L432.2,659.4 L433.1,657.6 L434.0,658.4 L434.9,659.2 L435.8,657.0 L436.7,656.3 L437.6,657.9 L438.5,659.2 L439.4,653.5 L440.3,656.5 L441.2,658.9 L442.1,659.3 L443.0,659.2 L443.9,660.1 L444.8,657.9 L445.7,660.4 L446.6,658.4 L447.5,657.8 L448.4,657.3 L449.3,653.6 L450.2,659.5 L451.1,658.2 L452.0,657.1 L452.9,658.4 L453.8,658.1 L454.7,659.2 L455.6,658.1 L456.5,657.9 L457.4,657.0 L458.3,659.0 L459.2,657.6 L460.1,653.0 L461.0,655.5 L461.9,659.3 L462.8,654.6 L463.7,657.0 L464.6,653.7 L465.5,657.4 L466.4,659.3 L467.3,656.8 L468.2,653.9 L469.1,657.6 L470.0,657.6 L470.9,659.1 L471.8,660.1 L472.7,657.3 L473.6,659.5 L474.5,656.0 L475.4,656.2 L476.3,658.1 L477.2,658.8 L478.1,660.0 L479.0,656.8 L479.9,656.0 L480.8,658.0 L481.7,658.7 L482.6,652.5 L483.5,658.9 L484.4,659.1 L485.3,655.1 L486.2,655.1 L487.1,657.2 L488.0,660.2 L488.9,658.9 L489.8,658.3 L490.7,658.6 L491.6,658.5 L492.5,659.5 L493.4,657.0 L494.3,657.1 L495.2,657.8 L496.1,657.7 L497.0,655.8 L497.9,659.1 L498.8,653.7 L499.7,656.5 L500.6,660.4 L501.5,655.9 L502.4,659.1 L503.3,659.0 L504.2,658.4 L505.1,657.6 L506.0,655.4 L506.9,658.0 L507.8,655.4 L508.7,659.7 L509.6,657.8 L510.5,657.2 L511.4,659.4 L512.3,657.9 L513.2,660.4 L514.1,653.2 L515.0,656.1 L515.9,658.8 L516.8,659.3 L517.7,657.1 L518.6,659.9 L519.5,653.8 L520.4,657.4 L521.3,658.1 L522.2,659.7 L523.1,659.8 L524.0,656.3 L524.9,659.2 L525.8,654.6 L526.7,657.3 L527.6,653.2 L528.5,657.9 L529.4,659.0 L530.3,656.1 L531.2,658.0 L532.1,660.1 L533.0,657.1 L533.9,660.3 L534.8,656.8 L535.7,658.0 L536.6,660.4 L537.5,657.0 L538.4,658.6 L539.3,659.9 L540.2,658.7 L541.1,658.6 L542.0,657.3 L542.9,658.7 L543.8,659.3 L544.7,656.0 L545.6,655.9 L546.5,657.7 L547.4,657.1 L548.3,657.7 L549.2,658.8 L550.1,659.1 L551.0,659.0 L551.9,660.3 L552.8,654.9 L553.7,659.5 L554.6,659.6 L555.5,658.3 L556.4,660.2 L557.3,658.7 L558.2,658.3 L559.1,658.3 L560.0,658.8 L560.9,657.0 L561.8,658.9 L562.7,660.0 L563.6,657.2 L564.5,656.3 L565.4,659.2 L566.3,659.0 L567.2,657.6 L568.1,656.9 L569.0,659.9 L569.9,657.7 L570.8,655.0 L571.7,655.5 L572.6,658.2 L573.5,657.6 L574.4,659.0 L575.3,658.3 L576.2,654.5 L577.1,660.0 L578.0,656.2 L578.9,656.6 L579.8,660.2 L580.7,656.3 L581.6,654.4 L582.5,659.5 L583.4,657.2 L584.3,656.4 L585.2,659.3 L586.1,657.5 L587.0,658.0 L587.9,658.4 L588.8,659.2 L589.7,658.5 L590.6,660.0 L591.5,660.0 L592.4,655.6 L593.3,655.2 L594.2,659.2 L595.1,659.1 L596.0,658.4 L596.9,658.4 L597.8,657.5 L598.7,654.0 L599.6,658.0 L600.5,659.1 L601.4,658.5 L602.3,657.7 L603.2,657.6 L604.1,657.5 L605.0,658.4 L605.9,657.2 L606.8,659.2 L607.7,657.5 L608.6,657.1 L609.5,657.4 L610.4,659.2 L611.3,658.5 L612.2,656.9 L613.1,660.0 L614.0,658.0 L614.9,657.9 L615.8,660.3 L616.7,657.2 L617.6,659.4 L618.5,659.1 L619.4,659.2 L620.3,656.9 L621.2,657.8 L622.1,656.8 L623.0,654.3 L623.9,657.0 L624.8,660.3 L625.7,654.9 L626.6,653.7 L627.5,660.1 L628.4,656.9 L629.3,656.9 L630.2,658.4 L631.1,658.5 L632.0,659.7 L632.9,660.1 L633.8,657.3 L634.7,658.2 L635.6,658.3 L636.5,657.9 L637.4,659.3 L638.3,659.2 L639.2,658.8 L640.1,656.1 L641.0,658.7 L641.9,658.7 L642.8,656.2 L643.7,657.9 L644.6,658.1 L645.5,660.2 L646.4,657.1 L647.3,656.3 L648.2,657.3 L649.1,654.7 L650.0,659.2 L650.9,658.2 L651.8,658.5 L652.7,657.1 L653.6,657.4 L654.5,657.1 L655.4,660.2 L656.3,655.4 L657.2,657.5 L658.1,657.4 L659.0,654.5 L659.9,657.5 L660.8,653.3 L661.7,659.2 L662.6,656.8 L663.5,659.2 L664.4,659.3 L665.3,657.9 L666.2,660.2 L667.1,657.8 L668.0,658.3 L668.9,655.8 L669.8,659.3 L670.7,658.1 L671.6,656.9 L672.5,657.9 L673.4,659.5 L674.3,659.5 L675.2,660.3 L676.1,659.6 L677.0,654.8 L677.9,659.3 L678.8,659.0 L679.7,653.4 L680.6,659.7 L681.5,654.3 L682.4,655.2 L683.3,659.4 L684.2,655.1 L685.1,658.2 L686.0,657.2 L686.9,660.1 L687.8,659.5 L688.7,659.0 L689.6,657.6 L690.5,656.9 L691.4,659.6 L692.3,658.9 L693.2,654.3 L694.1,658.8 L695.0,657.0 L695.9,658.8 L696.8,657.2 L697.7,659.1 L698.6,659.4 L699.5,659.0 L700.4,656.3 L701.3,655.2 L702.2,657.3 L703.1,657.6 L704.0,654.1 L704.9,657.1 L705.8,655.4 L706.7,656.2 L707.6,658.0 L708.5,656.9 L709.4,656.0 L710.3,652.3 L711.2,658.1 L712.1,658.1 L713.0,655.2 L713.9,653.4 L714.8,656.8 L715.7,657.0 L716.6,652.1 L717.5,657.1 L718.4,658.1 L719.3,657.3 L720.2,658.2 L721.1,655.6 L722.0,656.3 L722.9,655.7 L723.8,657.6 L724.7,655.5 L725.6,659.4 L726.5,658.4 L727.4,657.6 L728.3,658.9 L729.2,659.1 L730.1,657.3 L731.0,655.3 L731.9,655.4 L732.8,657.4 L733.7,658.6 L734.6,655.1 L735.5,656.5 L736.4,658.0 L737.3,659.1 L738.2,659.5 L739.1,657.1 L740.0,659.4 L740.9,656.1 L741.8,657.1 L742.7,658.3 L743.6,657.4 L744.5,655.0 L745.4,658.1 L746.3,655.0 L747.2,660.2 L748.1,660.0 L749.0,655.6 L749.9,653.5 L750.8,655.2 L751.7,658.5 L752.6,657.8 L753.5,657.3 L754.4,659.4 L755.3,660.1 L756.2,657.9 L756.2,667.1 L755.3,665.7 L754.4,666.9 L753.5,666.0 L752.6,667.7 L751.7,667.9 L750.8,668.2 L749.9,667.4 L749.0,667.2 L748.1,666.7 L747.2,667.2 L746.3,665.8 L745.4,667.6 L744.5,666.6 L743.6,668.3 L742.7,668.5 L741.8,668.5 L740.9,667.5 L740.0,666.3 L739.1,667.6 L738.2,667.2 L737.3,666.1 L736.4,665.9 L735.5,668.5 L734.6,666.6 L733.7,666.9 L732.8,668.0 L731.9,667.9 L731.0,667.9 L730.1,667.3 L729.2,668.1 L728.3,666.8 L727.4,668.1 L726.5,667.3 L725.6,666.9 L724.7,666.5 L723.8,667.3 L722.9,666.4 L722.0,665.5 L721.1,668.5 L720.2,667.9 L719.3,667.5 L718.4,667.7 L717.5,666.7 L716.6,668.4 L715.7,668.2 L714.8,666.4 L713.9,665.4 L713.0,668.4 L712.1,667.9 L711.2,667.6 L710.3,668.2 L709.4,666.7 L708.5,668.0 L707.6,665.5 L706.7,666.3 L705.8,667.6 L704.9,665.7 L704.0,665.6 L703.1,668.0 L702.2,666.6 L701.3,668.5 L700.4,666.7 L699.5,667.3 L698.6,667.8 L697.7,667.5 L696.8,666.5 L695.9,667.4 L695.0,667.2 L694.1,667.6 L693.2,667.5 L692.3,666.4 L691.4,667.0 L690.5,667.3 L689.6,667.2 L688.7,666.8 L687.8,667.9 L686.9,668.4 L686.0,666.2 L685.1,666.6 L684.2,668.2 L683.3,667.4 L682.4,667.0 L681.5,667.1 L680.6,666.8 L679.7,668.2 L678.8,666.8 L677.9,667.2 L677.0,666.2 L676.1,668.1 L675.2,666.3 L674.3,667.8 L673.4,668.6 L672.5,666.3 L671.6,668.4 L670.7,666.6 L669.8,666.6 L668.9,666.3 L668.0,666.7 L667.1,668.1 L666.2,667.2 L665.3,666.7 L664.4,667.3 L663.5,667.1 L662.6,667.5 L661.7,666.4 L660.8,668.1 L659.9,666.9 L659.0,667.7 L658.1,665.5 L657.2,668.4 L656.3,666.8 L655.4,665.6 L654.5,667.9 L653.6,667.9 L652.7,667.1 L651.8,666.4 L650.9,666.9 L650.0,668.5 L649.1,668.6 L648.2,667.8 L647.3,667.2 L646.4,667.2 L645.5,667.0 L644.6,667.8 L643.7,666.5 L642.8,667.0 L641.9,666.4 L641.0,666.5 L640.1,666.9 L639.2,667.0 L638.3,668.4 L637.4,667.7 L636.5,666.4 L635.6,668.4 L634.7,667.7 L633.8,668.6 L632.9,668.0 L632.0,666.5 L631.1,666.6 L630.2,665.5 L629.3,666.7 L628.4,668.0 L627.5,667.6 L626.6,666.6 L625.7,666.0 L624.8,668.0 L623.9,668.0 L623.0,667.8 L622.1,666.8 L621.2,668.4 L620.3,668.5 L619.4,666.7 L618.5,668.4 L617.6,667.2 L616.7,666.3 L615.8,668.2 L614.9,667.6 L614.0,667.9 L613.1,667.4 L612.2,668.1 L611.3,668.3 L610.4,667.0 L609.5,667.9 L608.6,668.4 L607.7,668.4 L606.8,667.8 L605.9,665.5 L605.0,665.3 L604.1,667.1 L603.2,667.0 L602.3,668.0 L601.4,667.4 L600.5,665.7 L599.6,667.1 L598.7,667.2 L597.8,667.4 L596.9,665.3 L596.0,666.7 L595.1,666.7 L594.2,667.0 L593.3,667.6 L592.4,667.1 L591.5,666.8 L590.6,667.7 L589.7,668.3 L588.8,666.6 L587.9,665.6 L587.0,668.3 L586.1,667.2 L585.2,668.4 L584.3,665.7 L583.4,665.6 L582.5,667.4 L581.6,667.2 L580.7,667.2 L579.8,668.2 L578.9,668.4 L578.0,666.4 L577.1,666.6 L576.2,668.0 L575.3,666.4 L574.4,667.4 L573.5,666.0 L572.6,667.8 L571.7,667.4 L570.8,666.4 L569.9,667.9 L569.0,667.1 L568.1,667.8 L567.2,666.6 L566.3,667.6 L565.4,668.1 L564.5,667.6 L563.6,667.3 L562.7,667.9 L561.8,666.6 L560.9,666.1 L560.0,667.0 L559.1,667.3 L558.2,666.6 L557.3,666.0 L556.4,666.8 L555.5,666.4 L554.6,665.5 L553.7,667.6 L552.8,666.8 L551.9,668.0 L551.0,667.8 L550.1,668.6 L549.2,667.7 L548.3,667.7 L547.4,667.3 L546.5,667.5 L545.6,668.4 L544.7,666.8 L543.8,667.4 L542.9,667.0 L542.0,668.5 L541.1,668.6 L540.2,666.6 L539.3,668.0 L538.4,667.5 L537.5,668.5 L536.6,665.2 L535.7,667.7 L534.8,668.3 L533.9,667.3 L533.0,666.8 L532.1,666.1 L531.2,666.5 L530.3,668.4 L529.4,666.8 L528.5,668.5 L527.6,667.0 L526.7,666.1 L525.8,665.3 L524.9,667.8 L524.0,667.6 L523.1,667.2 L522.2,668.3 L521.3,668.2 L520.4,665.9 L519.5,668.1 L518.6,668.4 L517.7,667.6 L516.8,667.0 L515.9,667.3 L515.0,668.3 L514.1,666.7 L513.2,668.2 L512.3,666.5 L511.4,668.0 L510.5,668.0 L509.6,665.8 L508.7,668.4 L507.8,667.3 L506.9,667.6 L506.0,668.6 L505.1,666.3 L504.2,667.9 L503.3,665.5 L502.4,666.8 L501.5,667.9 L500.6,666.9 L499.7,668.1 L498.8,667.1 L497.9,667.2 L497.0,667.6 L496.1,667.6 L495.2,666.3 L494.3,668.5 L493.4,667.1 L492.5,667.4 L491.6,666.9 L490.7,667.4 L489.8,668.0 L488.9,668.2 L488.0,667.6 L487.1,666.6 L486.2,667.7 L485.3,665.8 L484.4,666.9 L483.5,666.7 L482.6,667.2 L481.7,666.6 L480.8,668.0 L479.9,667.0 L479.0,666.8 L478.1,668.3 L477.2,668.0 L476.3,666.6 L475.4,668.0 L474.5,668.0 L473.6,666.9 L472.7,668.5 L471.8,668.1 L470.9,668.4 L470.0,667.0 L469.1,668.4 L468.2,665.9 L467.3,668.3 L466.4,666.7 L465.5,666.8 L464.6,666.9 L463.7,668.6 L462.8,666.8 L461.9,668.3 L461.0,667.1 L460.1,667.7 L459.2,668.0 L458.3,668.2 L457.4,668.1 L456.5,667.9 L455.6,667.8 L454.7,665.7 L453.8,665.3 L452.9,667.2 L452.0,668.5 L451.1,666.6 L450.2,667.9 L449.3,666.8 L448.4,668.5 L447.5,668.3 L446.6,666.5 L445.7,666.0 L444.8,667.3 L443.9,667.7 L443.0,668.2 L442.1,667.2 L441.2,667.3 L440.3,667.7 L439.4,667.0 L438.5,667.6 L437.6,668.3 L436.7,666.8 L435.8,667.6 L434.9,667.2 L434.0,666.6 L433.1,666.6 L432.2,667.0 L431.3,668.3 L430.4,667.0 L429.5,666.4 L428.6,667.5 L427.7,666.8 L426.8,666.7 L425.9,666.5 L425.0,666.7 L424.1,666.7 L423.2,665.9 L422.3,667.9 L421.4,666.8 L420.5,666.8 L419.6,666.5 L418.7,667.2 L417.8,667.7 L416.9,667.2 L416.0,665.8 L415.1,668.2 L414.2,667.2 L413.3,668.0 L412.4,668.0 L411.5,667.5 L410.6,666.8 L409.7,667.3 L408.8,668.0 L407.9,667.2 L407.0,668.4 L406.1,668.0 L405.2,668.2 L404.3,667.4 L403.4,665.8 L402.5,665.8 L401.6,668.5 L400.7,666.5 L399.8,666.9 L398.9,668.5 L398.0,666.8 L397.1,667.6 L396.2,668.3 L395.3,666.6 L394.4,665.8 L393.5,666.9 L392.6,667.3 L391.7,667.2 L390.8,667.9 L389.9,667.2 L389.0,668.4 L388.1,667.6 L387.2,667.7 L386.3,667.6 L385.4,666.7 L384.5,668.5 L383.6,668.4 L382.7,665.8 L381.8,668.0 L380.9,666.9 L380.0,665.8 L379.1,668.5 L378.2,668.1 L377.3,667.4 L376.4,665.4 L375.5,667.4 L374.6,667.1 L373.7,666.3 L372.8,667.1 L371.9,666.7 L371.0,667.3 L370.1,668.6 L369.2,667.5 L368.3,667.8 L367.4,667.6 L366.5,667.2 L365.6,666.7 L364.7,667.5 L363.8,667.7 L362.9,668.0 L362.0,667.6 L361.1,667.4 L360.2,666.8 L359.3,666.4 L358.4,668.0 L357.5,667.3 L356.6,668.2 L355.7,667.6 L354.8,668.2 L353.9,666.5 L353.0,666.8 L352.1,667.4 L351.2,666.9 L350.3,668.3 L349.4,667.9 L348.5,666.0 L347.6,667.0 L346.7,666.5 L345.8,666.8 L344.9,667.6 L344.0,667.8 L343.1,667.9 L342.2,666.6 L341.3,667.2 L340.4,666.7 L339.5,665.2 L338.6,667.6 L337.7,666.9 L336.8,666.9 L335.9,667.4 L335.0,667.8 L334.1,668.0 L333.2,667.3 L332.3,668.3 L331.4,668.1 L330.5,667.9 L329.6,668.1 L328.7,667.3 L327.8,667.1 L326.9,666.6 L326.0,667.7 L325.1,666.9 L324.2,667.9 L323.3,667.0 L322.4,666.7 L321.5,668.0 L320.6,668.4 L319.7,667.1 L318.8,668.5 L317.9,667.2 L317.0,666.9 L316.1,668.1 L315.2,667.7 L314.3,668.1 L313.4,668.0 L312.5,667.5 L311.6,667.5 L310.7,668.2 L309.8,667.3 L308.9,666.4 L308.0,665.9 L307.1,668.3 L306.2,667.4 L305.3,667.8 L304.4,668.5 L303.5,668.5 L302.6,668.3 L301.7,666.5 L300.8,668.2 L299.9,666.4 L299.0,667.1 L298.1,667.9 L297.2,666.5 L296.3,665.9 L295.4,667.0 L294.5,668.5 L293.6,668.3 L292.7,666.6 L291.8,666.5 L290.9,668.4 L290.0,666.1 L289.1,667.1 L288.2,667.5 L287.3,666.9 L286.4,666.2 L285.5,668.2 L284.6,667.1 L283.7,667.0 L282.8,666.4 L281.9,666.8 L281.0,668.5 L280.1,667.5 L279.2,665.6 L278.3,667.3 L277.4,667.9 L276.5,665.8 L275.6,667.1 L274.7,667.4 L273.8,666.5 L272.9,666.7 L272.0,667.1 L271.1,668.3 L270.2,667.8 L269.3,666.5 L268.4,666.9 L267.5,667.6 L266.6,667.1 L265.7,667.6 L264.8,666.6 L263.9,667.2 L263.0,668.1 L262.1,666.6 L261.2,667.1 L260.3,667.8 L259.4,668.5 L258.5,668.5 L257.6,668.3 L256.7,665.9 L255.8,666.5 L254.9,666.8 L254.0,666.6 L253.1,667.0 L252.2,668.0 L251.3,666.8 L250.4,667.7 L249.5,668.3 L248.6,668.0 L247.7,668.0 L246.8,666.8 L245.9,667.8 L245.0,666.5 L244.1,667.7 L243.2,666.8 L242.3,667.1 L241.4,667.7 L240.5,667.3 L239.6,667.4 L238.7,667.0 L237.8,668.1 L236.9,667.8 L236.0,667.0 L235.1,667.1 L234.2,666.9 L233.3,667.0 L232.4,665.4 L231.5,667.0 L230.6,665.6 L229.7,668.2 L228.8,666.6 L227.9,666.9 L227.0,667.2 L226.1,667.8 L225.2,665.6 L224.3,667.4 L223.4,666.9 L222.5,667.0 L221.6,667.7 L220.7,666.7 L219.8,666.5 L218.9,667.7 L218.0,667.1 L217.1,667.5 L216.2,666.3 L215.3,668.2 L214.4,667.0 L213.5,667.2 L212.6,668.4 L211.7,665.4 L210.8,667.0 L209.9,667.3 L209.0,667.0 L208.1,666.4 L207.2,667.3 L206.3,666.2 L205.4,666.6 L204.5,667.8 L203.6,668.2 L202.7,668.3 L201.8,665.8 L200.9,667.0 L200.0,668.1 L199.1,666.9 L198.2,667.0 L197.3,668.3 L196.4,668.1 L195.5,667.5 L194.6,666.7 L193.7,666.6 L192.8,667.7 L191.9,667.2 L191.0,668.4 L190.1,666.9 L189.2,666.7 L188.3,666.5 L187.4,667.8 L186.5,665.6 L185.6,666.9 L184.7,668.1 L183.8,666.6 L182.9,667.8 L182.0,667.9 L181.1,668.6 L180.2,668.2 L179.3,666.7 L178.4,668.1 L177.5,668.2 L176.6,668.0 L175.7,666.6 L174.8,668.1 L173.9,668.2 L173.0,667.2 L172.1,668.5 L171.2,666.4 L170.3,667.2 L169.4,668.5 L168.5,666.0 L167.6,666.9 L166.7,667.1 L165.8,667.2 L164.9,667.5 L164.0,666.7 L163.1,667.2 L162.2,667.9 L161.3,666.9 L160.4,667.9 L159.5,667.2 L158.6,665.8 L157.7,667.2 L156.8,666.2 L155.9,666.8 L155.0,665.6 L154.1,667.1 L153.2,668.2 L152.3,668.0 L151.4,667.2 L150.5,667.9 L149.6,666.5 L148.7,668.0 L147.8,667.4 L146.9,668.6 L146.0,667.3 L145.1,668.2 L144.2,666.8 L143.3,665.9 L142.4,667.1 L141.5,668.4 L140.6,666.8 L139.7,667.1 L138.8,666.5 L137.9,668.1 L137.0,667.0 L136.1,667.1 L135.2,665.9 L134.3,667.1 L133.4,667.0 L132.5,667.2 L131.6,666.8 L130.7,666.5 L129.8,665.4 L128.9,666.5 L128.0,667.6 L127.1,665.4 L126.2,665.3 L125.3,667.4 L124.4,665.6 L123.5,667.8 L122.6,667.6 L121.7,667.2 L120.8,667.6 L119.9,667.7 L119.0,667.1 L118.1,665.4 L117.2,667.8 L116.3,668.3 L115.4,667.4 L114.5,667.2 L113.6,668.3 L112.7,667.6 L111.8,668.0 L110.9,666.9 L110.0,666.5 L109.1,668.4 L108.2,668.5 L107.3,666.3 L106.4,668.3 L105.5,667.1 L104.6,667.8 L103.7,666.9 L102.8,668.4 L101.9,668.3 L101.0,665.5Z" fill="#00ff00" stroke="#00ff00" stroke-width="0.5" stroke-linejoin="round"/>
<rect x="148.2" y="648" width="2.4" height="12" fill="#24e824" />
<line x1="231.5" y1="522" x2="231.5" y2="669" stroke="#c83c3c" stroke-width="1" stroke-dasharray="2 2"/>
<circle cx="231.5" cy="621.6" r="1.8" fill="#d02828"/>
<text x="235.6" y="618.4" font-size="13" fill="#f2f07c" font-family='"Liberation Serif", serif' textLength="80.8" lengthAdjust="spacingAndGlyphs" >(240000CPM, 0g)</text>
</svg>
</body></html>
